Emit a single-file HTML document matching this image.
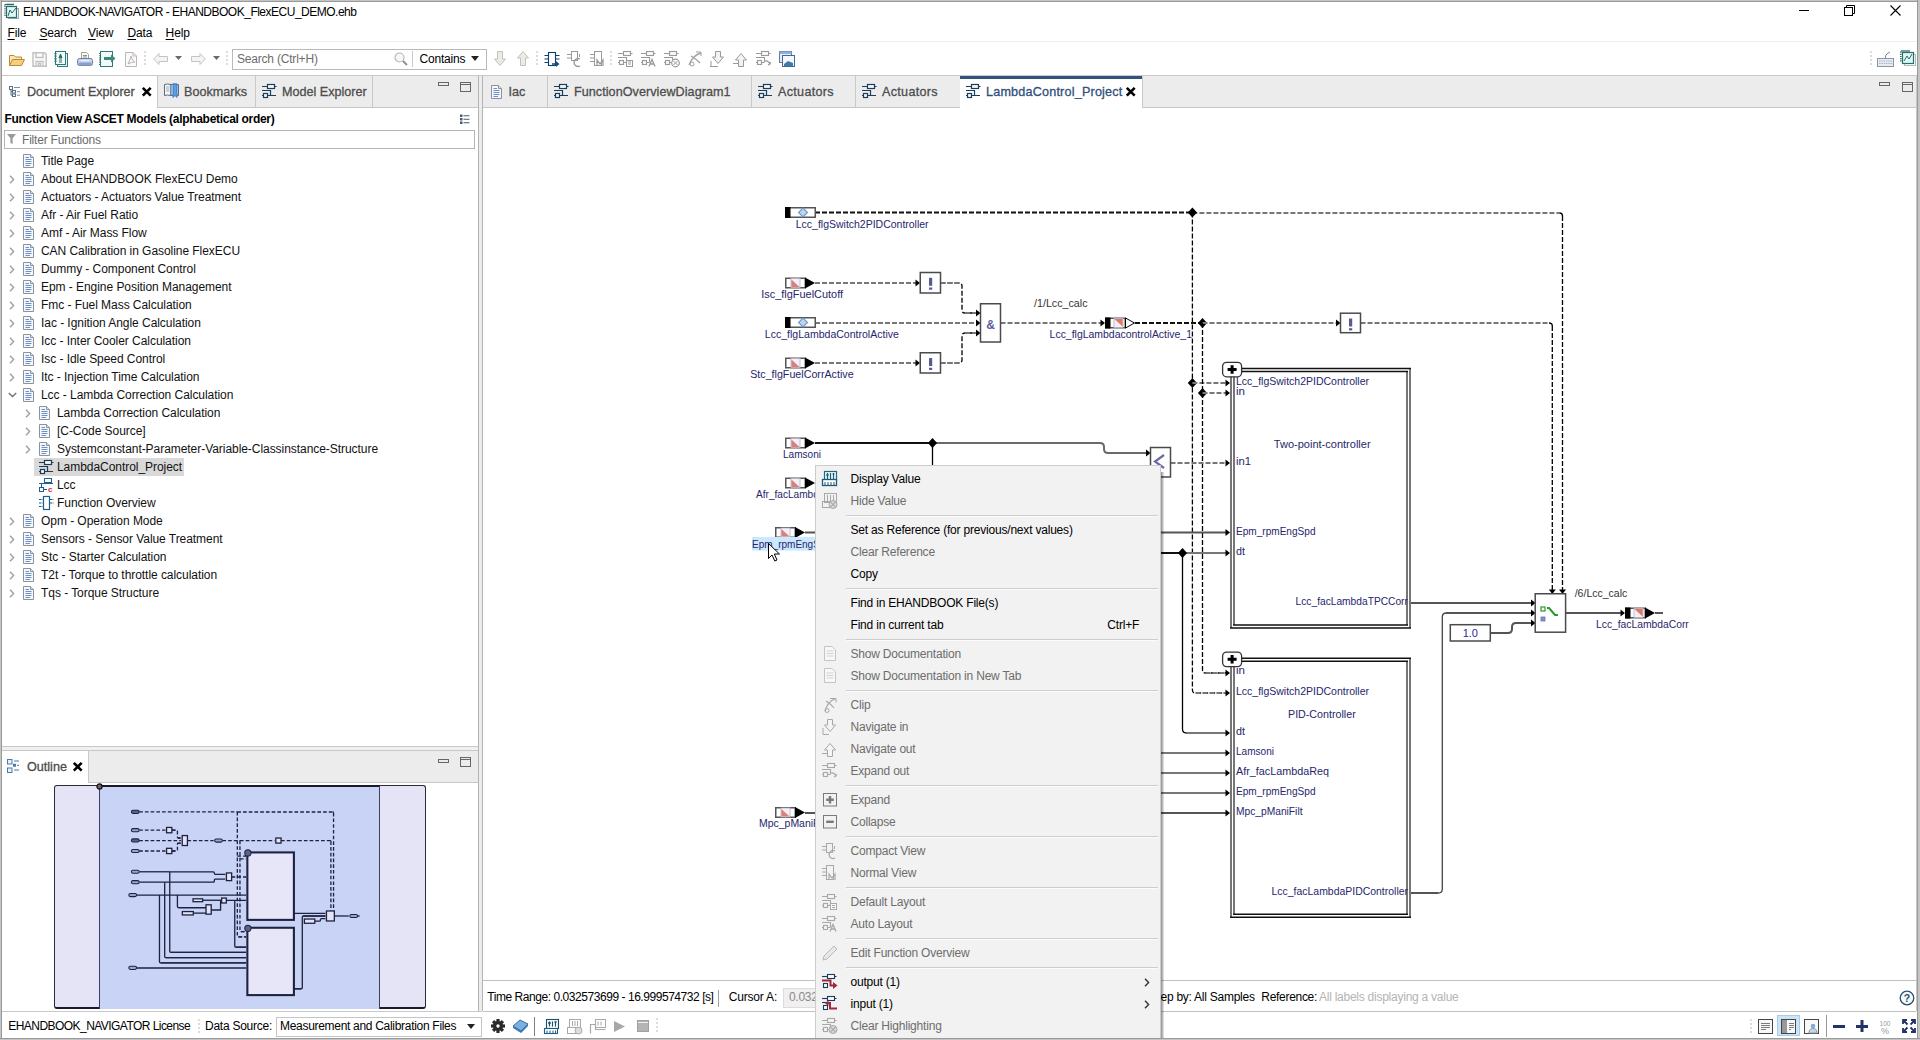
<!DOCTYPE html><html><head><meta charset="utf-8"><style>
html,body{margin:0;padding:0;}
body{width:1920px;height:1040px;overflow:hidden;position:relative;background:#fff;font-family:"Liberation Sans", sans-serif;}
.t{position:absolute;white-space:pre;font-family:"Liberation Sans", sans-serif;}
svg{overflow:visible;position:absolute}
</style></head><body>
<svg style="position:absolute;left:3px;top:3px;" width="16" height="16" viewBox="0 0 16 16"><rect x="5.5" y="5.5" width="10" height="10" fill="none" stroke="#9ab" stroke-width="1"/><rect x="3.5" y="3.5" width="10" height="11" fill="#dff7f7" stroke="#2d6e6a" stroke-width="1.2"/><path d="M1.5 2.5 Q2 1 4 1.5 H11" stroke="#2f6a66" stroke-width="1.3" fill="none"/><path d="M2 3 V14" stroke="#2f6a66" stroke-width="1.3" stroke-dasharray="1.2 1"/><path d="M5 13 L7 7 L9 10 L13 5" stroke="#2f6a66" fill="none"/></svg>
<div class="t" style="left:23px;top:5.84px;font-size:12px;line-height:12px;color:#000;font-weight:normal;letter-spacing:-0.5px;">EHANDBOOK-NAVIGATOR - EHANDBOOK_FlexECU_DEMO.ehb</div>
<svg style="position:absolute;left:1799px;top:10px;" width="10" height="1" viewBox="0 0 10 1"><rect x="0" y="0" width="10" height="1" fill="#000"/></svg>
<svg style="position:absolute;left:1844px;top:5px;" width="11" height="11" viewBox="0 0 11 11"><rect x="0.5" y="2.5" width="8" height="8" fill="none" stroke="#000"/><path d="M2.5 2.5 V0.5 H10.5 V8.5 H8.5" fill="none" stroke="#000"/></svg>
<svg style="position:absolute;left:1890px;top:5px;" width="11" height="11" viewBox="0 0 11 11"><path d="M0.5 0.5 L10.5 10.5 M10.5 0.5 L0.5 10.5" stroke="#000" stroke-width="1.1"/></svg>
<div class="t" style="left:7.5px;top:26.84px;font-size:12px;line-height:12px;color:#000;font-weight:normal;letter-spacing:-0.15px;"><u style="text-decoration-thickness:1px;text-underline-offset:2px">F</u>ile</div>
<div class="t" style="left:39.4px;top:26.84px;font-size:12px;line-height:12px;color:#000;font-weight:normal;letter-spacing:-0.15px;"><u style="text-decoration-thickness:1px;text-underline-offset:2px">S</u>earch</div>
<div class="t" style="left:88px;top:26.84px;font-size:12px;line-height:12px;color:#000;font-weight:normal;letter-spacing:-0.15px;"><u style="text-decoration-thickness:1px;text-underline-offset:2px">V</u>iew</div>
<div class="t" style="left:127.5px;top:26.84px;font-size:12px;line-height:12px;color:#000;font-weight:normal;letter-spacing:-0.15px;"><u style="text-decoration-thickness:1px;text-underline-offset:2px">D</u>ata</div>
<div class="t" style="left:165.6px;top:26.84px;font-size:12px;line-height:12px;color:#000;font-weight:normal;letter-spacing:-0.15px;"><u style="text-decoration-thickness:1px;text-underline-offset:2px">H</u>elp</div>
<div style="position:absolute;left:2px;top:41px;width:1915px;height:1px;background:#f0f0f0"></div>
<svg style="position:absolute;left:9px;top:54px;" width="16" height="13" viewBox="0 0 16 13"><path d="M0.5 11.5 V1.5 H5 L6.5 3 H12.5 V5.5" fill="#fbe7b4" stroke="#b88a3a"/><path d="M0.5 11.5 L3.5 5.5 H15.5 L12.5 11.5Z" fill="#f6cf7a" stroke="#b88a3a"/></svg>
<svg style="position:absolute;left:32px;top:52px;" width="15" height="15" viewBox="0 0 15 15"><path d="M1 0.8 H12.5 L14.2 2.5 V14.2 H1Z" fill="#fafafa" stroke="#c2c2c2" stroke-width="1.5"/><path d="M4 1 V5.5 H11 V1" fill="none" stroke="#c2c2c2" stroke-width="1.5"/><path d="M4 14 V9.5 H11 V14 M6.5 14 V11.5 H8.5 V14" fill="none" stroke="#c2c2c2" stroke-width="1.3"/></svg>
<svg style="position:absolute;left:54px;top:51px;" width="15" height="16" viewBox="0 0 15 16"><rect x="3.5" y="2.5" width="10" height="13" fill="#e0f4f2" stroke="#2f7f77"/><rect x="1.5" y="0.5" width="10" height="13" fill="#f0faf8" stroke="#2c7a72"/><path d="M1.5 2v10" stroke="#2c7a72" stroke-dasharray="1.2 1.3" stroke-width="2.2"/><path d="M6.5 3 L5 7 H8Z M5 9h3 M5 11h3" stroke="#2c6a62" fill="#2c6a62" stroke-width="1"/></svg>
<svg style="position:absolute;left:77px;top:52px;" width="16" height="15" viewBox="0 0 16 15"><path d="M4.5 0.5 H9.5 L11.5 2.5 V7 H4.5Z" fill="#fffbe8" stroke="#a8a080"/><path d="M6 3.5h4 M6 5h4" stroke="#8090b0"/><rect x="0.5" y="6.5" width="15" height="7" rx="2" fill="#c8d6ee" stroke="#6a80a8"/><rect x="1.5" y="10.5" width="13" height="3" fill="#8aa0c8"/><path d="M4 8.5h8" stroke="#eef"/></svg>
<svg style="position:absolute;left:100px;top:51px;" width="16" height="16" viewBox="0 0 16 16"><rect x="0.5" y="0.5" width="12" height="15" fill="#f2faf9" stroke="#2c7a72"/><path d="M0 2v12" stroke="#2c7a72" stroke-dasharray="1 1.2" stroke-width="2"/><path d="M4 7.5 H12" stroke="#3a8a80" stroke-width="3"/><path d="M11 3.5 L15.5 7.5 L11 11.5Z" fill="#3a8a80"/></svg>
<svg style="position:absolute;left:125px;top:52px;" width="12" height="15" viewBox="0 0 12 15"><path d="M0.5 0.5 H8 L11.5 4 V14.5 H0.5 Z" fill="#fafafa" stroke="#b8b8b8"/><path d="M8 0.5 V4 H11.5" fill="none" stroke="#b8b8b8"/><path d="M3 12 Q5 8 6 4 Q7 9 10 10 Q6 10 3 12Z" fill="none" stroke="#b8a8a8" stroke-width="0.9"/></svg>
<svg style="position:absolute;left:144px;top:51px;" width="2" height="16" viewBox="0 0 2 16"><path d="M1 0 V16" stroke="#dcdcdc" stroke-width="2" stroke-dasharray="2 2"/></svg>
<svg style="position:absolute;left:153px;top:53px;" width="15" height="12" viewBox="0 0 15 12"><path d="M6 0.5 L0.7 6 L6 11.5 V8.5 H14.5 V3.5 H6 Z" fill="#f4f4f4" stroke="#c4c4c4"/></svg>
<svg style="position:absolute;left:175px;top:56px;" width="8" height="4" viewBox="0 0 8 4"><path d="M0 0 H7 L3.5 4Z" fill="#6a6a6a"/></svg>
<svg style="position:absolute;left:191px;top:53px;" width="15" height="12" viewBox="0 0 15 12"><path d="M9 0.5 L14.3 6 L9 11.5 V8.5 H0.5 V3.5 H9 Z" fill="#f4f4f4" stroke="#c4c4c4"/></svg>
<svg style="position:absolute;left:213px;top:56px;" width="8" height="4" viewBox="0 0 8 4"><path d="M0 0 H7 L3.5 4Z" fill="#6a6a6a"/></svg>
<svg style="position:absolute;left:226px;top:51px;" width="2" height="16" viewBox="0 0 2 16"><path d="M1 0 V16" stroke="#dcdcdc" stroke-width="2" stroke-dasharray="2 2"/></svg>
<div style="position:absolute;left:232px;top:49px;width:253px;height:19px;border:1px solid #b9b9b9;background:#fff"></div>
<div class="t" style="left:237px;top:52.84px;font-size:12px;line-height:12px;color:#6d6d6d;font-weight:normal;letter-spacing:-0.2px;">Search (Ctrl+H)</div>
<svg style="position:absolute;left:394px;top:52px;" width="14" height="14" viewBox="0 0 14 14"><circle cx="5.5" cy="5.5" r="4.5" fill="#f4f8fb" stroke="#b8b8b8" stroke-width="1.2"/><path d="M9 9 L13 13" stroke="#909090" stroke-width="2"/></svg>
<div style="position:absolute;left:412px;top:51px;width:1px;height:16px;background:#c8c8c8"></div>
<div class="t" style="left:419.5px;top:52.84px;font-size:12px;line-height:12px;color:#000;font-weight:normal;letter-spacing:-0.2px;">Contains</div>
<svg style="position:absolute;left:471px;top:56px;" width="8" height="5" viewBox="0 0 8 5"><path d="M0 0 H8 L4 5Z" fill="#222"/></svg>
<svg style="position:absolute;left:494px;top:51px;" width="12" height="15" viewBox="0 0 12 15"><path d="M3.5 0.5 H8.5 V8 H11.5 L6 14.5 L0.5 8 H3.5Z" fill="#ecece6" stroke="#c2c2bc"/></svg>
<svg style="position:absolute;left:517px;top:51px;" width="12" height="15" viewBox="0 0 12 15"><path d="M3.5 14.5 H8.5 V7 H11.5 L6 0.5 L0.5 7 H3.5Z" fill="#ecece6" stroke="#c2c2bc"/></svg>
<svg style="position:absolute;left:536px;top:51px;" width="2" height="16" viewBox="0 0 2 16"><path d="M1 0 V16" stroke="#dcdcdc" stroke-width="2" stroke-dasharray="2 2"/></svg>
<svg style="position:absolute;left:544px;top:51px;" width="16" height="16" viewBox="0 0 16 16"><rect x="4.5" y="1.5" width="7" height="13" fill="#fff" stroke="#0f3d66" stroke-width="1.1"/><path d="M0.5 4.5h3.5 M0.5 8h3.5 M0.5 11.5h3.5 M12 4.5h3.5 M12 8h3.5" stroke="#0f3d66" stroke-width="1.2"/><path d="M8 13 h5" stroke="#1a5080" stroke-width="1.6"/><path d="M12 10 L15.5 13 L12 16Z" fill="#1a5080"/></svg>
<svg style="position:absolute;left:567px;top:51px;" width="16" height="16" viewBox="0 0 16 16"><path d="M0 3.5h4 M0 7h4" stroke="#9a9a9a"/><rect x="4.5" y="0.5" width="6" height="9" fill="none" stroke="#9a9a9a"/><path d="M13 8 A4 4 0 1 0 13 15" fill="none" stroke="#9a9a9a" stroke-width="1.4"/><path d="M12.5 3 v3" stroke="#9a9a9a"/></svg>
<svg style="position:absolute;left:590px;top:51px;" width="16" height="16" viewBox="0 0 16 16"><path d="M0 3.5h4 M0 7h4 M0 10.5h4" stroke="#9a9a9a"/><rect x="4.5" y="0.5" width="7" height="14" fill="none" stroke="#9a9a9a"/><path d="M7 15 V9 L10 13 L13 9 V15" fill="none" stroke="#9a9a9a" stroke-width="1.3"/></svg>
<svg style="position:absolute;left:610px;top:51px;" width="2" height="16" viewBox="0 0 2 16"><path d="M1 0 V16" stroke="#dcdcdc" stroke-width="2" stroke-dasharray="2 2"/></svg>
<svg style="position:absolute;left:618px;top:51px;" width="16" height="16" viewBox="0 0 16 16"><path d="M0 2.5 H14.5 M0 6.5 H8.5 V11.5 M0 11.5 H8" stroke="#9a9a9a" stroke-width="1.1" fill="none"/><rect x="5.5" y="0.5" width="7" height="4" fill="#fafafa" stroke="#9a9a9a" stroke-width="1.1"/><rect x="1.5" y="9.5" width="4" height="4" fill="#fafafa" stroke="#9a9a9a" stroke-width="1.1"/><rect x="8.5" y="9.5" width="6" height="6" fill="#fff" stroke="#9a9a9a"/><path d="M10 11h3 M10 13h3" stroke="#9a9a9a"/></svg>
<svg style="position:absolute;left:641px;top:51px;" width="16" height="16" viewBox="0 0 16 16"><path d="M0 2.5 H14.5 M0 6.5 H8.5 V11.5 M0 11.5 H8" stroke="#9a9a9a" stroke-width="1.1" fill="none"/><rect x="5.5" y="0.5" width="7" height="4" fill="#fafafa" stroke="#9a9a9a" stroke-width="1.1"/><rect x="1.5" y="9.5" width="4" height="4" fill="#fafafa" stroke="#9a9a9a" stroke-width="1.1"/><path d="M8 15.5 L11 8.5 L14 15.5 M9 13h4" stroke="#9a9a9a" fill="none" stroke-width="1.3"/></svg>
<svg style="position:absolute;left:664px;top:51px;" width="16" height="16" viewBox="0 0 16 16"><path d="M0 2.5 H14.5 M0 6.5 H8.5 V11.5 M0 11.5 H8" stroke="#9a9a9a" stroke-width="1.1" fill="none"/><rect x="5.5" y="0.5" width="7" height="4" fill="#fafafa" stroke="#9a9a9a" stroke-width="1.1"/><rect x="1.5" y="9.5" width="4" height="4" fill="#fafafa" stroke="#9a9a9a" stroke-width="1.1"/><circle cx="11.5" cy="12" r="3.8" fill="#fff" stroke="#9a9a9a" stroke-width="1.2"/><path d="M9.5 10 L13.5 14 M13.5 10 L9.5 14" stroke="#9a9a9a"/></svg>
<svg style="position:absolute;left:687px;top:51px;" width="16" height="16" viewBox="0 0 16 16"><path d="M2 14 Q6 4 14 2 M4 5 Q9 8 13 12" stroke="#a0a0a0" stroke-width="1.3" fill="none"/><circle cx="5" cy="13" r="2" fill="none" stroke="#a0a0a0"/><path d="M9 1 h5 v4" stroke="#a0a0a0" fill="none"/></svg>
<svg style="position:absolute;left:710px;top:51px;" width="16" height="16" viewBox="0 0 16 16"><path d="M5.5 0.5 H10.5 V6 H13.5 L8 12.5 L2.5 6 H5.5Z" fill="#f2f2f2" stroke="#9a9a9a"/><path d="M0 15.5 H8" stroke="#9a9a9a"/><path d="M1 10 V15.5" stroke="#9a9a9a"/></svg>
<svg style="position:absolute;left:733px;top:51px;" width="16" height="16" viewBox="0 0 16 16"><path d="M5.5 15.5 H10.5 V9 H13.5 L8 2.5 L2.5 9 H5.5Z" fill="#f2f2f2" stroke="#9a9a9a"/><path d="M0 12.5 H5" stroke="#9a9a9a"/></svg>
<svg style="position:absolute;left:756px;top:51px;" width="16" height="16" viewBox="0 0 16 16"><path d="M0 2.5 H14.5 M0 6.5 H8.5 V11.5 M0 11.5 H8" stroke="#9a9a9a" stroke-width="1.1" fill="none"/><rect x="5.5" y="0.5" width="7" height="4" fill="#fafafa" stroke="#9a9a9a" stroke-width="1.1"/><rect x="1.5" y="9.5" width="4" height="4" fill="#fafafa" stroke="#9a9a9a" stroke-width="1.1"/><path d="M9 10 Q12 9 14 13 M12 14 L14 13 L14.5 11" stroke="#9a9a9a" fill="none" stroke-width="1.2"/></svg>
<svg style="position:absolute;left:779px;top:51px;" width="16" height="16" viewBox="0 0 16 16"><rect x="0.5" y="0.5" width="12" height="11" fill="#e8eef6" stroke="#5878a0"/><rect x="0.5" y="0.5" width="12" height="2.5" fill="#8fb0d8"/><rect x="3.5" y="4.5" width="12" height="11" fill="#f4f7fb" stroke="#3f6a96"/><path d="M5 13 L9 10 L14 12 V15 H5Z" fill="#3f7aa6"/></svg>
<svg style="position:absolute;left:1870px;top:51px;" width="2" height="16" viewBox="0 0 2 16"><path d="M1 0 V16" stroke="#dcdcdc" stroke-width="2" stroke-dasharray="2 2"/></svg>
<svg style="position:absolute;left:1877px;top:51px;" width="17" height="16" viewBox="0 0 17 16"><rect x="0.5" y="7.5" width="16" height="8" fill="#e6ecf2" stroke="#8a96a4"/><path d="M2 10h13 M2 12.5h13" stroke="#a8b4c2" stroke-dasharray="1.5 0.8"/><path d="M8.5 7.5 V5 Q9 3 13 1" stroke="#7a8694" fill="none"/></svg>
<svg style="position:absolute;left:1900px;top:50px;" width="17" height="17" viewBox="0 0 17 17"><rect x="4.5" y="4.5" width="11" height="11" fill="none" stroke="#a8c0c0"/><rect x="2.5" y="2.5" width="11" height="11" fill="#dff7f7" stroke="#2d6e6a" stroke-width="1.2"/><path d="M0.8 1.5 V12" stroke="#2f6a66" stroke-width="1.5" stroke-dasharray="1.2 1"/><path d="M1 1 H10" stroke="#2f6a66" stroke-width="1.3"/><path d="M4 11 L7 6 L9 9 L12 4" stroke="#2f6a66" fill="none"/></svg>
<div style="position:absolute;left:2px;top:75px;width:1915px;height:1px;background:#c9c9c9"></div>
<div style="position:absolute;left:2px;top:76px;width:476px;height:31px;background:#ececec"></div>
<div style="position:absolute;left:2px;top:76px;width:155px;height:32px;background:#fff"></div>
<div style="position:absolute;left:157px;top:76px;width:1px;height:31px;background:#c8c8c8"></div>
<div style="position:absolute;left:255px;top:76px;width:1px;height:31px;background:#c8c8c8"></div>
<div style="position:absolute;left:372px;top:76px;width:1px;height:31px;background:#c8c8c8"></div>
<div style="position:absolute;left:157px;top:107px;width:321px;height:1px;background:#c8c8c8"></div>
<svg style="position:absolute;left:9px;top:86px;" width="12" height="11" viewBox="0 0 12 11"><rect x="0.5" y="0.5" width="3" height="3" fill="none" stroke="#5a7088"/><rect x="3.5" y="4.5" width="3" height="2.5" fill="none" stroke="#5a7088"/><rect x="3.5" y="8" width="3" height="2.5" fill="none" stroke="#5a7088"/><path d="M2 3.5 V9.2 H3.5 M2 5.7h1.5" stroke="#5a7088" fill="none"/><path d="M5 1.5 H11 M8 5.7h3 M8 9.2h3" stroke="#8090a0"/></svg>
<div class="t" style="left:27px;top:86.13px;font-size:12.6px;line-height:12.6px;color:#4d4d4d;font-weight:normal;letter-spacing:0px;-webkit-text-stroke:0.3px currentColor;">Document Explorer</div>
<svg style="position:absolute;left:141.5px;top:87px;" width="9.5" height="9.5" viewBox="0 0 9.5 9.5"><path d="M0.8 0.8 L8.7 8.7 M8.7 0.8 L0.8 8.7" stroke="#000" stroke-width="2.6"/></svg>
<svg style="position:absolute;left:164px;top:83px;" width="15" height="15" viewBox="0 0 15 15"><path d="M0.5 1.5 Q3 0.5 7 1.5 V12.5 Q3 11.5 0.5 12.5Z" fill="#f4f6fa" stroke="#5a6a80"/><path d="M7 1.5 Q11 0.5 14.5 1.5 V12.5 Q11 11.5 7 12.5Z" fill="#dce8f8" stroke="#5a6a80"/><path d="M9 1 H13 V14.5 L11 12.5 L9 14.5Z" fill="#5aa0e8" stroke="#2a6ab8" stroke-width="0.8"/><path d="M2 4h3.5 M2 6h3.5 M2 8h3.5" stroke="#a0aab8"/></svg>
<div class="t" style="left:184px;top:86.13px;font-size:12.6px;line-height:12.6px;color:#4d4d4d;font-weight:normal;letter-spacing:0px;-webkit-text-stroke:0.3px currentColor;">Bookmarks</div>
<svg style="position:absolute;left:262px;top:84px;" width="15" height="14" viewBox="0 0 15 14"><path d="M0 2.5 H14.5 M0 6.5 H8.5 V11.5 M0 11.5 H14" stroke="#1e3c58" stroke-width="1.2" fill="none"/><rect x="5.5" y="0.5" width="7" height="4" fill="#f0fbff" stroke="#1e3c58" stroke-width="1.2"/><rect x="1.5" y="9.5" width="4" height="4" fill="#f0fbff" stroke="#1e3c58" stroke-width="1.2"/></svg>
<div class="t" style="left:282px;top:86.13px;font-size:12.6px;line-height:12.6px;color:#4d4d4d;font-weight:normal;letter-spacing:0px;-webkit-text-stroke:0.3px currentColor;">Model Explorer</div>
<svg style="position:absolute;left:438px;top:82px;" width="11" height="4" viewBox="0 0 11 4"><rect x="0.5" y="0.5" width="10" height="3" fill="none" stroke="#666"/></svg>
<svg style="position:absolute;left:460px;top:82px;" width="11" height="10" viewBox="0 0 11 10"><rect x="0.5" y="0.5" width="10" height="9" fill="none" stroke="#666"/><path d="M0.5 2.5 H10.5" stroke="#666"/></svg>
<div class="t" style="left:4.5px;top:112.84px;font-size:12px;line-height:12px;color:#000;font-weight:bold;letter-spacing:-0.3px;">Function View ASCET Models (alphabetical order)</div>
<svg style="position:absolute;left:460px;top:114px;" width="10" height="10" viewBox="0 0 10 10"><rect x="0" y="0.5" width="2.5" height="2.5" fill="#4a5a6e"/><rect x="0" y="4" width="2.5" height="2.5" fill="#4a5a6e"/><rect x="0" y="7.5" width="2.5" height="2.5" fill="#4a5a6e"/><path d="M3.5 1.7h6 M3.5 5.2h6 M3.5 8.7h6" stroke="#4a5a6e" stroke-width="1.1"/></svg>
<div style="position:absolute;left:4px;top:130px;width:469px;height:17px;border:1px solid #b4b4b4;background:#fff"></div>
<svg style="position:absolute;left:6.5px;top:134px;" width="9" height="10" viewBox="0 0 9 10"><path d="M0 0 H9 L5.6 4.2 V10 L3.4 9 V4.2 Z" fill="#9a9a9a"/></svg>
<div class="t" style="left:22px;top:133.84px;font-size:12px;line-height:12px;color:#6a6a6a;font-weight:normal;letter-spacing:-0.2px;">Filter Functions</div>
<svg style="position:absolute;left:23px;top:154px;" width="12" height="15" viewBox="0 0 12 15"><path d="M0.5 0.5 H7.5 L10.5 3.5 V13.5 H0.5 Z" fill="#f4f7fc" stroke="#8a929c"/><path d="M7.5 0.5 V3.5 H10.5" fill="#dde2e8" stroke="#8a929c"/><path d="M2.5 3.5h3.5 M2.5 5.5h6 M2.5 7.5h6 M2.5 9.5h6 M2.5 11.5h4.5" stroke="#6f8fc8" stroke-width="1"/></svg>
<div class="t" style="left:41px;top:154.64px;font-size:12px;line-height:12px;color:#111;font-weight:normal;letter-spacing:-0.05px;">Title Page</div>
<svg style="position:absolute;left:9px;top:175px;" width="6" height="9" viewBox="0 0 6 9"><path d="M1 0.8 L4.6 4.5 L1 8.2" fill="none" stroke="#a0a0a0" stroke-width="1.4"/></svg>
<svg style="position:absolute;left:23px;top:172px;" width="12" height="15" viewBox="0 0 12 15"><path d="M0.5 0.5 H7.5 L10.5 3.5 V13.5 H0.5 Z" fill="#f4f7fc" stroke="#8a929c"/><path d="M7.5 0.5 V3.5 H10.5" fill="#dde2e8" stroke="#8a929c"/><path d="M2.5 3.5h3.5 M2.5 5.5h6 M2.5 7.5h6 M2.5 9.5h6 M2.5 11.5h4.5" stroke="#6f8fc8" stroke-width="1"/></svg>
<div class="t" style="left:41px;top:172.64px;font-size:12px;line-height:12px;color:#111;font-weight:normal;letter-spacing:-0.05px;">About EHANDBOOK FlexECU Demo</div>
<svg style="position:absolute;left:9px;top:193px;" width="6" height="9" viewBox="0 0 6 9"><path d="M1 0.8 L4.6 4.5 L1 8.2" fill="none" stroke="#a0a0a0" stroke-width="1.4"/></svg>
<svg style="position:absolute;left:23px;top:190px;" width="12" height="15" viewBox="0 0 12 15"><path d="M0.5 0.5 H7.5 L10.5 3.5 V13.5 H0.5 Z" fill="#f4f7fc" stroke="#8a929c"/><path d="M7.5 0.5 V3.5 H10.5" fill="#dde2e8" stroke="#8a929c"/><path d="M2.5 3.5h3.5 M2.5 5.5h6 M2.5 7.5h6 M2.5 9.5h6 M2.5 11.5h4.5" stroke="#6f8fc8" stroke-width="1"/></svg>
<div class="t" style="left:41px;top:190.64px;font-size:12px;line-height:12px;color:#111;font-weight:normal;letter-spacing:-0.05px;">Actuators - Actuators Value Treatment</div>
<svg style="position:absolute;left:9px;top:211px;" width="6" height="9" viewBox="0 0 6 9"><path d="M1 0.8 L4.6 4.5 L1 8.2" fill="none" stroke="#a0a0a0" stroke-width="1.4"/></svg>
<svg style="position:absolute;left:23px;top:208px;" width="12" height="15" viewBox="0 0 12 15"><path d="M0.5 0.5 H7.5 L10.5 3.5 V13.5 H0.5 Z" fill="#f4f7fc" stroke="#8a929c"/><path d="M7.5 0.5 V3.5 H10.5" fill="#dde2e8" stroke="#8a929c"/><path d="M2.5 3.5h3.5 M2.5 5.5h6 M2.5 7.5h6 M2.5 9.5h6 M2.5 11.5h4.5" stroke="#6f8fc8" stroke-width="1"/></svg>
<div class="t" style="left:41px;top:208.64px;font-size:12px;line-height:12px;color:#111;font-weight:normal;letter-spacing:-0.05px;">Afr - Air Fuel Ratio</div>
<svg style="position:absolute;left:9px;top:229px;" width="6" height="9" viewBox="0 0 6 9"><path d="M1 0.8 L4.6 4.5 L1 8.2" fill="none" stroke="#a0a0a0" stroke-width="1.4"/></svg>
<svg style="position:absolute;left:23px;top:226px;" width="12" height="15" viewBox="0 0 12 15"><path d="M0.5 0.5 H7.5 L10.5 3.5 V13.5 H0.5 Z" fill="#f4f7fc" stroke="#8a929c"/><path d="M7.5 0.5 V3.5 H10.5" fill="#dde2e8" stroke="#8a929c"/><path d="M2.5 3.5h3.5 M2.5 5.5h6 M2.5 7.5h6 M2.5 9.5h6 M2.5 11.5h4.5" stroke="#6f8fc8" stroke-width="1"/></svg>
<div class="t" style="left:41px;top:226.64px;font-size:12px;line-height:12px;color:#111;font-weight:normal;letter-spacing:-0.05px;">Amf - Air Mass Flow</div>
<svg style="position:absolute;left:9px;top:247px;" width="6" height="9" viewBox="0 0 6 9"><path d="M1 0.8 L4.6 4.5 L1 8.2" fill="none" stroke="#a0a0a0" stroke-width="1.4"/></svg>
<svg style="position:absolute;left:23px;top:244px;" width="12" height="15" viewBox="0 0 12 15"><path d="M0.5 0.5 H7.5 L10.5 3.5 V13.5 H0.5 Z" fill="#f4f7fc" stroke="#8a929c"/><path d="M7.5 0.5 V3.5 H10.5" fill="#dde2e8" stroke="#8a929c"/><path d="M2.5 3.5h3.5 M2.5 5.5h6 M2.5 7.5h6 M2.5 9.5h6 M2.5 11.5h4.5" stroke="#6f8fc8" stroke-width="1"/></svg>
<div class="t" style="left:41px;top:244.64px;font-size:12px;line-height:12px;color:#111;font-weight:normal;letter-spacing:-0.05px;">CAN Calibration in Gasoline FlexECU</div>
<svg style="position:absolute;left:9px;top:265px;" width="6" height="9" viewBox="0 0 6 9"><path d="M1 0.8 L4.6 4.5 L1 8.2" fill="none" stroke="#a0a0a0" stroke-width="1.4"/></svg>
<svg style="position:absolute;left:23px;top:262px;" width="12" height="15" viewBox="0 0 12 15"><path d="M0.5 0.5 H7.5 L10.5 3.5 V13.5 H0.5 Z" fill="#f4f7fc" stroke="#8a929c"/><path d="M7.5 0.5 V3.5 H10.5" fill="#dde2e8" stroke="#8a929c"/><path d="M2.5 3.5h3.5 M2.5 5.5h6 M2.5 7.5h6 M2.5 9.5h6 M2.5 11.5h4.5" stroke="#6f8fc8" stroke-width="1"/></svg>
<div class="t" style="left:41px;top:262.64px;font-size:12px;line-height:12px;color:#111;font-weight:normal;letter-spacing:-0.05px;">Dummy - Component Control</div>
<svg style="position:absolute;left:9px;top:283px;" width="6" height="9" viewBox="0 0 6 9"><path d="M1 0.8 L4.6 4.5 L1 8.2" fill="none" stroke="#a0a0a0" stroke-width="1.4"/></svg>
<svg style="position:absolute;left:23px;top:280px;" width="12" height="15" viewBox="0 0 12 15"><path d="M0.5 0.5 H7.5 L10.5 3.5 V13.5 H0.5 Z" fill="#f4f7fc" stroke="#8a929c"/><path d="M7.5 0.5 V3.5 H10.5" fill="#dde2e8" stroke="#8a929c"/><path d="M2.5 3.5h3.5 M2.5 5.5h6 M2.5 7.5h6 M2.5 9.5h6 M2.5 11.5h4.5" stroke="#6f8fc8" stroke-width="1"/></svg>
<div class="t" style="left:41px;top:280.64px;font-size:12px;line-height:12px;color:#111;font-weight:normal;letter-spacing:-0.05px;">Epm - Engine Position Management</div>
<svg style="position:absolute;left:9px;top:301px;" width="6" height="9" viewBox="0 0 6 9"><path d="M1 0.8 L4.6 4.5 L1 8.2" fill="none" stroke="#a0a0a0" stroke-width="1.4"/></svg>
<svg style="position:absolute;left:23px;top:298px;" width="12" height="15" viewBox="0 0 12 15"><path d="M0.5 0.5 H7.5 L10.5 3.5 V13.5 H0.5 Z" fill="#f4f7fc" stroke="#8a929c"/><path d="M7.5 0.5 V3.5 H10.5" fill="#dde2e8" stroke="#8a929c"/><path d="M2.5 3.5h3.5 M2.5 5.5h6 M2.5 7.5h6 M2.5 9.5h6 M2.5 11.5h4.5" stroke="#6f8fc8" stroke-width="1"/></svg>
<div class="t" style="left:41px;top:298.64px;font-size:12px;line-height:12px;color:#111;font-weight:normal;letter-spacing:-0.05px;">Fmc - Fuel Mass Calculation</div>
<svg style="position:absolute;left:9px;top:319px;" width="6" height="9" viewBox="0 0 6 9"><path d="M1 0.8 L4.6 4.5 L1 8.2" fill="none" stroke="#a0a0a0" stroke-width="1.4"/></svg>
<svg style="position:absolute;left:23px;top:316px;" width="12" height="15" viewBox="0 0 12 15"><path d="M0.5 0.5 H7.5 L10.5 3.5 V13.5 H0.5 Z" fill="#f4f7fc" stroke="#8a929c"/><path d="M7.5 0.5 V3.5 H10.5" fill="#dde2e8" stroke="#8a929c"/><path d="M2.5 3.5h3.5 M2.5 5.5h6 M2.5 7.5h6 M2.5 9.5h6 M2.5 11.5h4.5" stroke="#6f8fc8" stroke-width="1"/></svg>
<div class="t" style="left:41px;top:316.64px;font-size:12px;line-height:12px;color:#111;font-weight:normal;letter-spacing:-0.05px;">Iac - Ignition Angle Calculation</div>
<svg style="position:absolute;left:9px;top:337px;" width="6" height="9" viewBox="0 0 6 9"><path d="M1 0.8 L4.6 4.5 L1 8.2" fill="none" stroke="#a0a0a0" stroke-width="1.4"/></svg>
<svg style="position:absolute;left:23px;top:334px;" width="12" height="15" viewBox="0 0 12 15"><path d="M0.5 0.5 H7.5 L10.5 3.5 V13.5 H0.5 Z" fill="#f4f7fc" stroke="#8a929c"/><path d="M7.5 0.5 V3.5 H10.5" fill="#dde2e8" stroke="#8a929c"/><path d="M2.5 3.5h3.5 M2.5 5.5h6 M2.5 7.5h6 M2.5 9.5h6 M2.5 11.5h4.5" stroke="#6f8fc8" stroke-width="1"/></svg>
<div class="t" style="left:41px;top:334.64px;font-size:12px;line-height:12px;color:#111;font-weight:normal;letter-spacing:-0.05px;">Icc - Inter Cooler Calculation</div>
<svg style="position:absolute;left:9px;top:355px;" width="6" height="9" viewBox="0 0 6 9"><path d="M1 0.8 L4.6 4.5 L1 8.2" fill="none" stroke="#a0a0a0" stroke-width="1.4"/></svg>
<svg style="position:absolute;left:23px;top:352px;" width="12" height="15" viewBox="0 0 12 15"><path d="M0.5 0.5 H7.5 L10.5 3.5 V13.5 H0.5 Z" fill="#f4f7fc" stroke="#8a929c"/><path d="M7.5 0.5 V3.5 H10.5" fill="#dde2e8" stroke="#8a929c"/><path d="M2.5 3.5h3.5 M2.5 5.5h6 M2.5 7.5h6 M2.5 9.5h6 M2.5 11.5h4.5" stroke="#6f8fc8" stroke-width="1"/></svg>
<div class="t" style="left:41px;top:352.64px;font-size:12px;line-height:12px;color:#111;font-weight:normal;letter-spacing:-0.05px;">Isc - Idle Speed Control</div>
<svg style="position:absolute;left:9px;top:373px;" width="6" height="9" viewBox="0 0 6 9"><path d="M1 0.8 L4.6 4.5 L1 8.2" fill="none" stroke="#a0a0a0" stroke-width="1.4"/></svg>
<svg style="position:absolute;left:23px;top:370px;" width="12" height="15" viewBox="0 0 12 15"><path d="M0.5 0.5 H7.5 L10.5 3.5 V13.5 H0.5 Z" fill="#f4f7fc" stroke="#8a929c"/><path d="M7.5 0.5 V3.5 H10.5" fill="#dde2e8" stroke="#8a929c"/><path d="M2.5 3.5h3.5 M2.5 5.5h6 M2.5 7.5h6 M2.5 9.5h6 M2.5 11.5h4.5" stroke="#6f8fc8" stroke-width="1"/></svg>
<div class="t" style="left:41px;top:370.64px;font-size:12px;line-height:12px;color:#111;font-weight:normal;letter-spacing:-0.05px;">Itc - Injection Time Calculation</div>
<svg style="position:absolute;left:7.5px;top:392px;" width="9" height="6" viewBox="0 0 9 6"><path d="M0.8 1 L4.5 4.6 L8.2 1" fill="none" stroke="#707070" stroke-width="1.4"/></svg>
<svg style="position:absolute;left:23px;top:388px;" width="12" height="15" viewBox="0 0 12 15"><path d="M0.5 0.5 H7.5 L10.5 3.5 V13.5 H0.5 Z" fill="#f4f7fc" stroke="#8a929c"/><path d="M7.5 0.5 V3.5 H10.5" fill="#dde2e8" stroke="#8a929c"/><path d="M2.5 3.5h3.5 M2.5 5.5h6 M2.5 7.5h6 M2.5 9.5h6 M2.5 11.5h4.5" stroke="#6f8fc8" stroke-width="1"/></svg>
<div class="t" style="left:41px;top:388.64px;font-size:12px;line-height:12px;color:#111;font-weight:normal;letter-spacing:-0.05px;">Lcc - Lambda Correction Calculation</div>
<svg style="position:absolute;left:25px;top:409px;" width="6" height="9" viewBox="0 0 6 9"><path d="M1 0.8 L4.6 4.5 L1 8.2" fill="none" stroke="#a0a0a0" stroke-width="1.4"/></svg>
<svg style="position:absolute;left:39px;top:406px;" width="12" height="15" viewBox="0 0 12 15"><path d="M0.5 0.5 H7.5 L10.5 3.5 V13.5 H0.5 Z" fill="#f4f7fc" stroke="#8a929c"/><path d="M7.5 0.5 V3.5 H10.5" fill="#dde2e8" stroke="#8a929c"/><path d="M2.5 3.5h3.5 M2.5 5.5h6 M2.5 7.5h6 M2.5 9.5h6 M2.5 11.5h4.5" stroke="#6f8fc8" stroke-width="1"/></svg>
<div class="t" style="left:57px;top:406.64px;font-size:12px;line-height:12px;color:#111;font-weight:normal;letter-spacing:-0.05px;">Lambda Correction Calculation</div>
<svg style="position:absolute;left:25px;top:427px;" width="6" height="9" viewBox="0 0 6 9"><path d="M1 0.8 L4.6 4.5 L1 8.2" fill="none" stroke="#a0a0a0" stroke-width="1.4"/></svg>
<svg style="position:absolute;left:39px;top:424px;" width="12" height="15" viewBox="0 0 12 15"><path d="M0.5 0.5 H7.5 L10.5 3.5 V13.5 H0.5 Z" fill="#f4f7fc" stroke="#8a929c"/><path d="M7.5 0.5 V3.5 H10.5" fill="#dde2e8" stroke="#8a929c"/><path d="M2.5 3.5h3.5 M2.5 5.5h6 M2.5 7.5h6 M2.5 9.5h6 M2.5 11.5h4.5" stroke="#6f8fc8" stroke-width="1"/></svg>
<div class="t" style="left:57px;top:424.64px;font-size:12px;line-height:12px;color:#111;font-weight:normal;letter-spacing:-0.05px;">[C-Code Source]</div>
<svg style="position:absolute;left:25px;top:445px;" width="6" height="9" viewBox="0 0 6 9"><path d="M1 0.8 L4.6 4.5 L1 8.2" fill="none" stroke="#a0a0a0" stroke-width="1.4"/></svg>
<svg style="position:absolute;left:39px;top:442px;" width="12" height="15" viewBox="0 0 12 15"><path d="M0.5 0.5 H7.5 L10.5 3.5 V13.5 H0.5 Z" fill="#f4f7fc" stroke="#8a929c"/><path d="M7.5 0.5 V3.5 H10.5" fill="#dde2e8" stroke="#8a929c"/><path d="M2.5 3.5h3.5 M2.5 5.5h6 M2.5 7.5h6 M2.5 9.5h6 M2.5 11.5h4.5" stroke="#6f8fc8" stroke-width="1"/></svg>
<div class="t" style="left:57px;top:442.64px;font-size:12px;line-height:12px;color:#111;font-weight:normal;letter-spacing:-0.05px;">Systemconstant-Parameter-Variable-Classinstance-Structure</div>
<div style="position:absolute;left:34px;top:458px;width:150px;height:18px;background:#d9d9d9"></div>
<svg style="position:absolute;left:39px;top:460px;" width="15" height="14" viewBox="0 0 15 14"><path d="M0 2.5 H14.5 M0 6.5 H8.5 V11.5 M0 11.5 H14" stroke="#1e3c58" stroke-width="1.2" fill="none"/><rect x="5.5" y="0.5" width="7" height="4" fill="#f0fbff" stroke="#1e3c58" stroke-width="1.2"/><rect x="1.5" y="9.5" width="4" height="4" fill="#f0fbff" stroke="#1e3c58" stroke-width="1.2"/></svg>
<div class="t" style="left:57px;top:460.64px;font-size:12px;line-height:12px;color:#111;font-weight:normal;letter-spacing:-0.05px;">LambdaControl_Project</div>
<svg style="position:absolute;left:39px;top:478px;" width="15" height="14" viewBox="0 0 15 14"><rect x="5.5" y="0.5" width="7" height="4" fill="none" stroke="#1f5f8f"/><rect x="0.5" y="9.5" width="4" height="4" fill="none" stroke="#1f5f8f"/><path d="M0 5.5 H14 M5 11.5 H8 M2.5 5.5 V9" stroke="#1f5f8f" fill="none"/><text x="9" y="13.5" font-size="8" font-weight="bold" fill="#c0304a" font-family="Liberation Sans">c</text></svg>
<div class="t" style="left:57px;top:478.64px;font-size:12px;line-height:12px;color:#111;font-weight:normal;letter-spacing:-0.05px;">Lcc</div>
<svg style="position:absolute;left:39px;top:496px;" width="15" height="14" viewBox="0 0 15 14"><rect x="4.5" y="0.5" width="6" height="13" fill="none" stroke="#1f5f8f" stroke-width="1.2"/><path d="M0 3.5h4 M0 7h4 M0 10.5h4 M11 3.5h4 M11 7h4" stroke="#1f5f8f" stroke-width="1.2" stroke-dasharray="2.5 1"/></svg>
<div class="t" style="left:57px;top:496.64px;font-size:12px;line-height:12px;color:#111;font-weight:normal;letter-spacing:-0.05px;">Function Overview</div>
<svg style="position:absolute;left:9px;top:517px;" width="6" height="9" viewBox="0 0 6 9"><path d="M1 0.8 L4.6 4.5 L1 8.2" fill="none" stroke="#a0a0a0" stroke-width="1.4"/></svg>
<svg style="position:absolute;left:23px;top:514px;" width="12" height="15" viewBox="0 0 12 15"><path d="M0.5 0.5 H7.5 L10.5 3.5 V13.5 H0.5 Z" fill="#f4f7fc" stroke="#8a929c"/><path d="M7.5 0.5 V3.5 H10.5" fill="#dde2e8" stroke="#8a929c"/><path d="M2.5 3.5h3.5 M2.5 5.5h6 M2.5 7.5h6 M2.5 9.5h6 M2.5 11.5h4.5" stroke="#6f8fc8" stroke-width="1"/></svg>
<div class="t" style="left:41px;top:514.64px;font-size:12px;line-height:12px;color:#111;font-weight:normal;letter-spacing:-0.05px;">Opm - Operation Mode</div>
<svg style="position:absolute;left:9px;top:535px;" width="6" height="9" viewBox="0 0 6 9"><path d="M1 0.8 L4.6 4.5 L1 8.2" fill="none" stroke="#a0a0a0" stroke-width="1.4"/></svg>
<svg style="position:absolute;left:23px;top:532px;" width="12" height="15" viewBox="0 0 12 15"><path d="M0.5 0.5 H7.5 L10.5 3.5 V13.5 H0.5 Z" fill="#f4f7fc" stroke="#8a929c"/><path d="M7.5 0.5 V3.5 H10.5" fill="#dde2e8" stroke="#8a929c"/><path d="M2.5 3.5h3.5 M2.5 5.5h6 M2.5 7.5h6 M2.5 9.5h6 M2.5 11.5h4.5" stroke="#6f8fc8" stroke-width="1"/></svg>
<div class="t" style="left:41px;top:532.64px;font-size:12px;line-height:12px;color:#111;font-weight:normal;letter-spacing:-0.05px;">Sensors - Sensor Value Treatment</div>
<svg style="position:absolute;left:9px;top:553px;" width="6" height="9" viewBox="0 0 6 9"><path d="M1 0.8 L4.6 4.5 L1 8.2" fill="none" stroke="#a0a0a0" stroke-width="1.4"/></svg>
<svg style="position:absolute;left:23px;top:550px;" width="12" height="15" viewBox="0 0 12 15"><path d="M0.5 0.5 H7.5 L10.5 3.5 V13.5 H0.5 Z" fill="#f4f7fc" stroke="#8a929c"/><path d="M7.5 0.5 V3.5 H10.5" fill="#dde2e8" stroke="#8a929c"/><path d="M2.5 3.5h3.5 M2.5 5.5h6 M2.5 7.5h6 M2.5 9.5h6 M2.5 11.5h4.5" stroke="#6f8fc8" stroke-width="1"/></svg>
<div class="t" style="left:41px;top:550.64px;font-size:12px;line-height:12px;color:#111;font-weight:normal;letter-spacing:-0.05px;">Stc - Starter Calculation</div>
<svg style="position:absolute;left:9px;top:571px;" width="6" height="9" viewBox="0 0 6 9"><path d="M1 0.8 L4.6 4.5 L1 8.2" fill="none" stroke="#a0a0a0" stroke-width="1.4"/></svg>
<svg style="position:absolute;left:23px;top:568px;" width="12" height="15" viewBox="0 0 12 15"><path d="M0.5 0.5 H7.5 L10.5 3.5 V13.5 H0.5 Z" fill="#f4f7fc" stroke="#8a929c"/><path d="M7.5 0.5 V3.5 H10.5" fill="#dde2e8" stroke="#8a929c"/><path d="M2.5 3.5h3.5 M2.5 5.5h6 M2.5 7.5h6 M2.5 9.5h6 M2.5 11.5h4.5" stroke="#6f8fc8" stroke-width="1"/></svg>
<div class="t" style="left:41px;top:568.64px;font-size:12px;line-height:12px;color:#111;font-weight:normal;letter-spacing:-0.05px;">T2t - Torque to throttle calculation</div>
<svg style="position:absolute;left:9px;top:589px;" width="6" height="9" viewBox="0 0 6 9"><path d="M1 0.8 L4.6 4.5 L1 8.2" fill="none" stroke="#a0a0a0" stroke-width="1.4"/></svg>
<svg style="position:absolute;left:23px;top:586px;" width="12" height="15" viewBox="0 0 12 15"><path d="M0.5 0.5 H7.5 L10.5 3.5 V13.5 H0.5 Z" fill="#f4f7fc" stroke="#8a929c"/><path d="M7.5 0.5 V3.5 H10.5" fill="#dde2e8" stroke="#8a929c"/><path d="M2.5 3.5h3.5 M2.5 5.5h6 M2.5 7.5h6 M2.5 9.5h6 M2.5 11.5h4.5" stroke="#6f8fc8" stroke-width="1"/></svg>
<div class="t" style="left:41px;top:586.64px;font-size:12px;line-height:12px;color:#111;font-weight:normal;letter-spacing:-0.05px;">Tqs - Torque Structure</div>
<div style="position:absolute;left:2px;top:746px;width:476px;height:1px;background:#c8c8c8"></div>
<div style="position:absolute;left:2px;top:747px;width:476px;height:3px;background:#f0f0f0"></div>
<div style="position:absolute;left:478px;top:76px;width:1px;height:935px;background:#b4b4b4"></div>
<div style="position:absolute;left:479px;top:76px;width:3px;height:935px;background:#ececec"></div>
<div style="position:absolute;left:482px;top:76px;width:1px;height:935px;background:#b4b4b4"></div>
<div style="position:absolute;left:2px;top:750px;width:476px;height:1px;background:#c8c8c8"></div>
<div style="position:absolute;left:2px;top:751px;width:476px;height:31px;background:#ececec"></div>
<div style="position:absolute;left:2px;top:751px;width:86px;height:32px;background:#fff"></div>
<div style="position:absolute;left:88px;top:751px;width:1px;height:31px;background:#c8c8c8"></div>
<div style="position:absolute;left:88px;top:782px;width:390px;height:1px;background:#c8c8c8"></div>
<svg style="position:absolute;left:7px;top:759px;" width="13" height="15" viewBox="0 0 13 15"><rect x="0.5" y="0.5" width="4.5" height="4.5" fill="#e8f0f8" stroke="#4a7aa8"/><rect x="0.5" y="9" width="4.5" height="4.5" fill="#e8f0f8" stroke="#4a7aa8"/><rect x="6.5" y="5.3" width="2" height="2" fill="none" stroke="#4a7aa8"/><path d="M7 2h5 M10 6.3h2 M7 11h5" stroke="#4a7aa8"/></svg>
<div class="t" style="left:27px;top:760.63px;font-size:12.6px;line-height:12.6px;color:#4d4d4d;font-weight:normal;letter-spacing:0px;-webkit-text-stroke:0.3px currentColor;">Outline</div>
<svg style="position:absolute;left:73px;top:762px;" width="9.5" height="9.5" viewBox="0 0 9.5 9.5"><path d="M0.8 0.8 L8.7 8.7 M8.7 0.8 L0.8 8.7" stroke="#000" stroke-width="2.6"/></svg>
<svg style="position:absolute;left:438px;top:759px;" width="11" height="4" viewBox="0 0 11 4"><rect x="0.5" y="0.5" width="10" height="3" fill="none" stroke="#666"/></svg>
<svg style="position:absolute;left:460px;top:757px;" width="11" height="10" viewBox="0 0 11 10"><rect x="0.5" y="0.5" width="10" height="9" fill="none" stroke="#666"/><path d="M0.5 2.5 H10.5" stroke="#666"/></svg>
<div style="position:absolute;left:483px;top:76px;width:1434px;height:31px;background:#ececec"></div>
<div style="position:absolute;left:483px;top:107px;width:1434px;height:1px;background:#c8c8c8"></div>
<div style="position:absolute;left:547px;top:76px;width:1px;height:31px;background:#c8c8c8"></div>
<div style="position:absolute;left:751px;top:76px;width:1px;height:31px;background:#c8c8c8"></div>
<div style="position:absolute;left:855px;top:76px;width:1px;height:31px;background:#c8c8c8"></div>
<div style="position:absolute;left:960px;top:76px;width:1px;height:31px;background:#c8c8c8"></div>
<div style="position:absolute;left:1142px;top:76px;width:1px;height:31px;background:#c8c8c8"></div>
<div style="position:absolute;left:960px;top:76px;width:182px;height:32px;background:#fff"></div>
<div style="position:absolute;left:960px;top:76px;width:182px;height:3px;background:#33527a"></div>
<div style="position:absolute;left:1142px;top:76px;width:1px;height:31px;background:#c8c8c8"></div>
<svg style="position:absolute;left:491px;top:85px;" width="12" height="15" viewBox="0 0 12 15"><path d="M0.5 0.5 H7.5 L10.5 3.5 V13.5 H0.5 Z" fill="#f4f7fc" stroke="#8a929c"/><path d="M7.5 0.5 V3.5 H10.5" fill="#dde2e8" stroke="#8a929c"/><path d="M2.5 3.5h3.5 M2.5 5.5h6 M2.5 7.5h6 M2.5 9.5h6 M2.5 11.5h4.5" stroke="#6f8fc8" stroke-width="1"/></svg>
<div class="t" style="left:508.5px;top:86.13px;font-size:12.6px;line-height:12.6px;color:#4d4d4d;font-weight:normal;letter-spacing:0px;-webkit-text-stroke:0.3px currentColor;">Iac</div>
<svg style="position:absolute;left:554px;top:84px;" width="15" height="14" viewBox="0 0 15 14"><path d="M0 2.5 H14.5 M0 6.5 H8.5 V11.5 M0 11.5 H14" stroke="#1e3c58" stroke-width="1.2" fill="none"/><rect x="5.5" y="0.5" width="7" height="4" fill="#f0fbff" stroke="#1e3c58" stroke-width="1.2"/><rect x="1.5" y="9.5" width="4" height="4" fill="#f0fbff" stroke="#1e3c58" stroke-width="1.2"/></svg>
<div class="t" style="left:574px;top:86.13px;font-size:12.6px;line-height:12.6px;color:#4d4d4d;font-weight:normal;letter-spacing:0.05px;-webkit-text-stroke:0.3px currentColor;">FunctionOverviewDiagram1</div>
<svg style="position:absolute;left:758px;top:84px;" width="15" height="14" viewBox="0 0 15 14"><path d="M0 2.5 H14.5 M0 6.5 H8.5 V11.5 M0 11.5 H14" stroke="#1e3c58" stroke-width="1.2" fill="none"/><rect x="5.5" y="0.5" width="7" height="4" fill="#f0fbff" stroke="#1e3c58" stroke-width="1.2"/><rect x="1.5" y="9.5" width="4" height="4" fill="#f0fbff" stroke="#1e3c58" stroke-width="1.2"/></svg>
<div class="t" style="left:778px;top:86.13px;font-size:12.6px;line-height:12.6px;color:#4d4d4d;font-weight:normal;letter-spacing:0.3px;-webkit-text-stroke:0.3px currentColor;">Actuators</div>
<svg style="position:absolute;left:862px;top:84px;" width="15" height="14" viewBox="0 0 15 14"><path d="M0 2.5 H14.5 M0 6.5 H8.5 V11.5 M0 11.5 H14" stroke="#1e3c58" stroke-width="1.2" fill="none"/><rect x="5.5" y="0.5" width="7" height="4" fill="#f0fbff" stroke="#1e3c58" stroke-width="1.2"/><rect x="1.5" y="9.5" width="4" height="4" fill="#f0fbff" stroke="#1e3c58" stroke-width="1.2"/></svg>
<div class="t" style="left:882px;top:86.13px;font-size:12.6px;line-height:12.6px;color:#4d4d4d;font-weight:normal;letter-spacing:0.3px;-webkit-text-stroke:0.3px currentColor;">Actuators</div>
<svg style="position:absolute;left:966px;top:84px;" width="15" height="14" viewBox="0 0 15 14"><path d="M0 2.5 H14.5 M0 6.5 H8.5 V11.5 M0 11.5 H14" stroke="#1e3c58" stroke-width="1.2" fill="none"/><rect x="5.5" y="0.5" width="7" height="4" fill="#f0fbff" stroke="#1e3c58" stroke-width="1.2"/><rect x="1.5" y="9.5" width="4" height="4" fill="#f0fbff" stroke="#1e3c58" stroke-width="1.2"/></svg>
<div class="t" style="left:986px;top:86.13px;font-size:12.6px;line-height:12.6px;color:#2f4f7c;font-weight:normal;letter-spacing:0.2px;-webkit-text-stroke:0.3px currentColor;">LambdaControl_Project</div>
<svg style="position:absolute;left:1126px;top:87px;" width="9.5" height="9.5" viewBox="0 0 9.5 9.5"><path d="M0.8 0.8 L8.7 8.7 M8.7 0.8 L0.8 8.7" stroke="#000" stroke-width="2.6"/></svg>
<svg style="position:absolute;left:1879px;top:82px;" width="11" height="4" viewBox="0 0 11 4"><rect x="0.5" y="0.5" width="10" height="3" fill="none" stroke="#666"/></svg>
<svg style="position:absolute;left:1902px;top:82px;" width="11" height="10" viewBox="0 0 11 10"><rect x="0.5" y="0.5" width="10" height="9" fill="none" stroke="#666"/><path d="M0.5 2.5 H10.5" stroke="#666"/></svg>
<div style="position:absolute;left:1916px;top:76px;width:1px;height:935px;background:#c8c8c8"></div>
<div style="position:absolute;left:483px;top:980px;width:1433px;height:1px;background:#c0c0c0"></div>
<div style="position:absolute;left:483px;top:1011px;width:1433px;height:1px;background:#c0c0c0"></div>
<div class="t" style="left:487.3px;top:991.34px;font-size:12px;line-height:12px;color:#000;font-weight:normal;letter-spacing:-0.45px;">Time Range: 0.032573699 - 16.999574732 [s]</div>
<div style="position:absolute;left:718px;top:990px;width:1px;height:17px;background:#a0a0a0"></div>
<div class="t" style="left:728.8px;top:991.34px;font-size:12px;line-height:12px;color:#000;font-weight:normal;letter-spacing:-0.2px;">Cursor A:</div>
<div style="position:absolute;left:782.5px;top:987.5px;width:120px;height:20px;background:#f0f0f0;border:1px solid #dcdcdc;box-sizing:border-box"></div>
<div class="t" style="left:789px;top:991.34px;font-size:12px;line-height:12px;color:#8a8a8a;font-weight:normal;letter-spacing:-0.3px;">0.032573699</div>
<div class="t" style="left:1100px;top:990.5px;width:154.7px;text-align:right;font-size:12px;line-height:12px;color:#000;letter-spacing:-0.25px">Step by: All Samples</div>
<div class="t" style="left:1261.3px;top:991.34px;font-size:12px;line-height:12px;color:#000;font-weight:normal;letter-spacing:-0.3px;">Reference:</div>
<div class="t" style="left:1319px;top:991.34px;font-size:12px;line-height:12px;color:#b4b4b4;font-weight:normal;letter-spacing:-0.25px;">All labels displaying a value</div>
<svg style="position:absolute;left:1899px;top:990px;" width="16" height="16" viewBox="0 0 16 16"><circle cx="8" cy="8" r="6.8" fill="#f4fbff" stroke="#2f4f6a" stroke-width="1.3"/><text x="8" y="12" text-anchor="middle" font-size="10.5" font-weight="bold" fill="#2f4f6a" font-family="Liberation Sans">?</text></svg>
<div class="t" style="left:8.3px;top:1019.84px;font-size:12px;line-height:12px;color:#000;font-weight:normal;letter-spacing:-0.55px;">EHANDBOOK_NAVIGATOR License</div>
<div style="position:absolute;left:2px;top:1011px;width:480px;height:1px;background:#c8c8c8"></div>
<svg style="position:absolute;left:198px;top:1019px;" width="2" height="16" viewBox="0 0 2 16"><path d="M1 0 V16" stroke="#dcdcdc" stroke-width="2" stroke-dasharray="2 2"/></svg>
<div class="t" style="left:205px;top:1019.84px;font-size:12px;line-height:12px;color:#000;font-weight:normal;letter-spacing:-0.25px;">Data Source:</div>
<div style="position:absolute;left:276px;top:1017px;width:206px;height:20px;border:1px solid #c4c4c4;background:#fff;box-sizing:border-box"></div>
<div class="t" style="left:280px;top:1019.84px;font-size:12px;line-height:12px;color:#000;font-weight:normal;letter-spacing:-0.3px;">Measurement and Calibration Files</div>
<svg style="position:absolute;left:467px;top:1024px;" width="8" height="5" viewBox="0 0 8 5"><path d="M0 0 H8 L4 5Z" fill="#222"/></svg>
<svg style="position:absolute;left:491px;top:1019px;" width="14" height="14" viewBox="0 0 14 14"><circle cx="7" cy="7" r="5" fill="#2a2a2a"/><rect x="5.4" y="0" width="3.2" height="3.2" fill="#2a2a2a" transform="rotate(0 7 7)"/><rect x="5.4" y="0" width="3.2" height="3.2" fill="#2a2a2a" transform="rotate(45 7 7)"/><rect x="5.4" y="0" width="3.2" height="3.2" fill="#2a2a2a" transform="rotate(90 7 7)"/><rect x="5.4" y="0" width="3.2" height="3.2" fill="#2a2a2a" transform="rotate(135 7 7)"/><rect x="5.4" y="0" width="3.2" height="3.2" fill="#2a2a2a" transform="rotate(180 7 7)"/><rect x="5.4" y="0" width="3.2" height="3.2" fill="#2a2a2a" transform="rotate(225 7 7)"/><rect x="5.4" y="0" width="3.2" height="3.2" fill="#2a2a2a" transform="rotate(270 7 7)"/><rect x="5.4" y="0" width="3.2" height="3.2" fill="#2a2a2a" transform="rotate(315 7 7)"/><circle cx="7" cy="7" r="1.7" fill="#fff"/></svg>
<svg style="position:absolute;left:512px;top:1019px;" width="17" height="13" viewBox="0 0 17 13"><path d="M1 7 L8 1 L16 5 L9 12 Z" fill="#7ab0e0" stroke="#3a6aa0"/><path d="M1 7 L1 9 L9 14 L16 7 V5 L9 12Z" fill="#3a78b8"/></svg>
<div style="position:absolute;left:534px;top:1017px;width:1px;height:19px;background:#808080"></div>
<svg style="position:absolute;left:544px;top:1019px;" width="16" height="16" viewBox="0 0 16 16"><rect x="2.5" y="0.5" width="12" height="9" fill="#f4fbfb" stroke="#1f4f66" stroke-width="1.1"/><path d="M5.5 2.5v5 M8.5 2.5v5 M11.5 2.5v5" stroke="#1f4f66" stroke-width="1.1"/><circle cx="5.5" cy="4" r="1.3" fill="#1f4f66"/><path d="M10.3 3h2.4" stroke="#1f4f66" stroke-width="1.2"/><rect x="0.5" y="9.5" width="13" height="5" fill="#fff" stroke="#1f6080" stroke-width="1.1"/><path d="M3 11.5v3 M6 11.5v3 M9 11.5v3 M11.5 11.5v3" stroke="#1f6080"/></svg>
<svg style="position:absolute;left:567px;top:1019px;" width="16" height="16" viewBox="0 0 16 16"><rect x="2.5" y="0.5" width="11" height="8" fill="none" stroke="#a8a8a8"/><path d="M5.5 2v5 M8 2v5 M10.5 2v5" stroke="#a8a8a8"/><rect x="0.5" y="8.5" width="9" height="6" fill="none" stroke="#a8a8a8"/><circle cx="11.5" cy="11.5" r="3.5" fill="#ddd" stroke="#a8a8a8"/></svg>
<svg style="position:absolute;left:590px;top:1019px;" width="16" height="16" viewBox="0 0 16 16"><rect x="5.5" y="0.5" width="10" height="8" fill="none" stroke="#a8a8a8"/><path d="M8 2.5v4 M11 2.5v4" stroke="#a8a8a8"/><path d="M0.5 14.5 V5.5 H5.5 V10.5 H15.5" fill="none" stroke="#a8a8a8" stroke-width="1.2"/></svg>
<svg style="position:absolute;left:613px;top:1020px;" width="13" height="13" viewBox="0 0 13 13"><path d="M1 1 L12 6.5 L1 12Z" fill="#a8a8a8"/></svg>
<svg style="position:absolute;left:637px;top:1020px;" width="12" height="12" viewBox="0 0 12 12"><rect x="0.5" y="0.5" width="11" height="11" fill="#b4b4b4" stroke="#a0a0a0"/><path d="M1 2.5 H11" stroke="#eee"/></svg>
<svg style="position:absolute;left:656px;top:1018px;" width="2" height="16" viewBox="0 0 2 16"><path d="M1 0 V16" stroke="#dcdcdc" stroke-width="2" stroke-dasharray="2 2"/></svg>
<svg style="position:absolute;left:1750px;top:1019px;" width="2" height="14" viewBox="0 0 2 14"><path d="M1 0 V14" stroke="#dcdcdc" stroke-width="2" stroke-dasharray="2 2"/></svg>
<svg style="position:absolute;left:1758px;top:1019px;" width="15" height="15" viewBox="0 0 15 15"><rect x="0.5" y="0.5" width="14" height="14" fill="#f8f8f8" stroke="#444"/><path d="M3 4.5h9 M3 6.5h9 M3 8.5h9 M3 10.5h5" stroke="#7a7a7a"/></svg>
<div style="position:absolute;left:1777px;top:1015px;width:23px;height:21px;background:#cce4f7;border:1px solid #a8cdec;box-sizing:border-box"></div>
<svg style="position:absolute;left:1781px;top:1019px;" width="15" height="15" viewBox="0 0 15 15"><rect x="0.5" y="0.5" width="14" height="14" fill="#f8f8f8" stroke="#444"/><rect x="1" y="1" width="5" height="13" fill="#999"/><path d="M8 4.5h5 M8 6.5h5 M8 8.5h5 M8 10.5h2" stroke="#7a7a7a"/></svg>
<svg style="position:absolute;left:1804px;top:1019px;" width="15" height="15" viewBox="0 0 15 15"><rect x="0.5" y="0.5" width="14" height="14" fill="#f8f8f8" stroke="#444"/><circle cx="9" cy="7" r="2.3" fill="#8aaad0"/><path d="M5 14 Q5 9.5 9 9.5 Q13 9.5 13 14Z" fill="#c8d4e4" stroke="#8a9ab0"/></svg>
<div style="position:absolute;left:1826px;top:1015px;width:1px;height:22px;background:#999"></div>
<svg style="position:absolute;left:1833px;top:1025px;" width="13" height="3" viewBox="0 0 13 3"><rect x="0" y="0" width="12" height="3" fill="#22336a"/></svg>
<svg style="position:absolute;left:1856px;top:1020px;" width="13" height="13" viewBox="0 0 13 13"><rect x="0" y="5" width="12" height="3" fill="#22336a"/><rect x="4.5" y="0" width="3" height="12" fill="#22336a"/></svg>
<svg style="position:absolute;left:1879px;top:1019px;" width="12" height="15" viewBox="0 0 12 15"><text x="6" y="6.5" text-anchor="middle" font-size="7" fill="#999" font-family="Liberation Sans" textLength="11" lengthAdjust="spacingAndGlyphs">100</text><text x="6" y="14.5" text-anchor="middle" font-size="9" fill="#999" font-family="Liberation Sans">%</text></svg>
<svg style="position:absolute;left:1902px;top:1019px;" width="14" height="14" viewBox="0 0 14 14"><path d="M1 5 V1 H5 M1 1 L5.5 5.5 M9 1 H13 V5 M13 1 L8.5 5.5 M1 9 V13 H5 M1 13 L5.5 8.5 M13 9 V13 H9 M13 13 L8.5 8.5" stroke="#22336a" stroke-width="1.8" fill="none"/></svg>
<div style="position:absolute;left:483px;top:108px;width:1433px;height:872px;overflow:hidden"><svg style="position:absolute;left:-483px;top:-108px" width="1920" height="1040" viewBox="0 0 1920 1040"><path d="M815 212.5 H1192.4" fill="none" stroke="#111" stroke-width="2" stroke-dasharray="5 2"/><path d="M1192.4 213 H1559.5" fill="none" stroke="#777" stroke-width="2" stroke-dasharray="5 2"/><path d="M1559.5 213 Q1562.5 213 1562.5 216" fill="none" stroke="#000" stroke-width="1.3"/><path d="M1562.5 216 V592" fill="none" stroke="#000" stroke-width="1.3" stroke-dasharray="5 2"/><path d="M1559.0 589.5 L1562.5 594 L1566.0 589.5Z" fill="#000"/><path d="M1192.4 212.5 V690 Q1192.4 693 1195.4 693 H1226" fill="none" stroke="#000" stroke-width="1.3" stroke-dasharray="5 2"/><path d="M1195.4 693 H1226" fill="none" stroke="#777" stroke-width="2" stroke-dasharray="5 2"/><path d="M1225.5 689.5 L1230 693 L1225.5 696.5Z" fill="#000"/><path d="M1192.4 207.5 L1197.0 212.5 L1192.4 217.5 L1187.8000000000002 212.5Z" fill="#000"/><path d="M1192.4 378 L1197.0 383 L1192.4 388 L1187.8000000000002 383Z" fill="#000"/><path d="M1192.4 383 H1226" fill="none" stroke="#777" stroke-width="2" stroke-dasharray="5 2"/><path d="M1225.5 379.5 L1230 383 L1225.5 386.5Z" fill="#000"/><path d="M815 283 H916" fill="none" stroke="#777" stroke-width="2" stroke-dasharray="5 2"/><path d="M915.5 279.5 L920 283 L915.5 286.5Z" fill="#000"/><path d="M940.5 283 H959 Q962 283 962 286 V310 Q962 313 965 313 H976" fill="none" stroke="#000" stroke-width="1.3" stroke-dasharray="5 2"/><path d="M940.5 283 H959" fill="none" stroke="#777" stroke-width="2" stroke-dasharray="5 2"/><path d="M965 313 H976" fill="none" stroke="#777" stroke-width="2" stroke-dasharray="5 2"/><path d="M976.0 309.5 L980.5 313 L976.0 316.5Z" fill="#000"/><path d="M815 323 H976" fill="none" stroke="#777" stroke-width="2" stroke-dasharray="5 2"/><path d="M976.0 319.5 L980.5 323 L976.0 326.5Z" fill="#000"/><path d="M815 363 H916" fill="none" stroke="#777" stroke-width="2" stroke-dasharray="5 2"/><path d="M915.5 359.5 L920 363 L915.5 366.5Z" fill="#000"/><path d="M940.5 363 H959 Q962 363 962 360 V336 Q962 333 965 333 H976" fill="none" stroke="#000" stroke-width="1.3" stroke-dasharray="5 2"/><path d="M940.5 363 H959" fill="none" stroke="#777" stroke-width="2" stroke-dasharray="5 2"/><path d="M965 333 H976" fill="none" stroke="#777" stroke-width="2" stroke-dasharray="5 2"/><path d="M976.0 329.5 L980.5 333 L976.0 336.5Z" fill="#000"/><path d="M1000.5 323 H1101" fill="none" stroke="#777" stroke-width="2" stroke-dasharray="5 2"/><path d="M1100.5 319.5 L1105 323 L1100.5 326.5Z" fill="#000"/><path d="M1135 323 H1202.5" fill="none" stroke="#111" stroke-width="2" stroke-dasharray="5 2"/><path d="M1202.5 318 L1207.1 323 L1202.5 328 L1197.9 323Z" fill="#000"/><path d="M1202.5 323 H1336" fill="none" stroke="#777" stroke-width="2" stroke-dasharray="5 2"/><path d="M1336.0 319.5 L1340.5 323 L1336.0 326.5Z" fill="#000"/><path d="M1360.5 323 H1549" fill="none" stroke="#777" stroke-width="2" stroke-dasharray="5 2"/><path d="M1549 323 Q1552.3 323 1552.3 326" fill="none" stroke="#000" stroke-width="1.3"/><path d="M1552.3 326 V592" fill="none" stroke="#000" stroke-width="1.3" stroke-dasharray="5 2"/><path d="M1548.8 589.5 L1552.3 594 L1555.8 589.5Z" fill="#000"/><path d="M1202.5 323 V670 Q1202.5 673 1205.5 673 H1226" fill="none" stroke="#000" stroke-width="1.3" stroke-dasharray="5 2"/><path d="M1205.5 673 H1226" fill="none" stroke="#777" stroke-width="2" stroke-dasharray="5 2"/><path d="M1225.5 669.5 L1230 673 L1225.5 676.5Z" fill="#000"/><path d="M1202.5 388 L1207.1 393 L1202.5 398 L1197.9 393Z" fill="#000"/><path d="M1202.5 393 H1226" fill="none" stroke="#777" stroke-width="2" stroke-dasharray="5 2"/><path d="M1225.5 389.5 L1230 393 L1225.5 396.5Z" fill="#000"/><path d="M815 443 H932.5" fill="none" stroke="#111" stroke-width="2"/><path d="M932.5 443 H1100 Q1104 443 1104 447 V449 Q1104 453 1108 453 H1146" fill="none" stroke="#6a6a6a" stroke-width="2"/><path d="M1146.0 449.5 L1150.5 453 L1146.0 456.5Z" fill="#000"/><path d="M932.5 438 L937.1 443 L932.5 448 L927.9 443Z" fill="#000"/><path d="M932.5 443 V749 Q932.5 753 936.5 753 H1226" fill="none" stroke="#000" stroke-width="1.3"/><path d="M936.5 753 H1226" fill="none" stroke="#777" stroke-width="2"/><path d="M1225.5 749.5 L1230 753 L1225.5 756.5Z" fill="#000"/><path d="M815 483 H1100 Q1104 483 1104 479 V475 Q1104 471 1108 471 H1146" fill="none" stroke="#222" stroke-width="2"/><path d="M1146.0 467.5 L1150.5 471 L1146.0 474.5Z" fill="#000"/><path d="M913 483 V769 Q913 773 917 773 H1226" fill="none" stroke="#000" stroke-width="1.3"/><path d="M917 773 H1226" fill="none" stroke="#777" stroke-width="2"/><path d="M1225.5 769.5 L1230 773 L1225.5 776.5Z" fill="#000"/><path d="M1170.5 463 H1226" fill="none" stroke="#777" stroke-width="2" stroke-dasharray="5 2"/><path d="M1225.5 459.5 L1230 463 L1225.5 466.5Z" fill="#000"/><path d="M805 532.5 H1226" fill="none" stroke="#555" stroke-width="2"/><path d="M1225.5 529.0 L1230 532.5 L1225.5 536.0Z" fill="#000"/><path d="M893 532.5 V789 Q893 793 897 793 H1226" fill="none" stroke="#000" stroke-width="1.3"/><path d="M897 793 H1226" fill="none" stroke="#777" stroke-width="2"/><path d="M1225.5 789.5 L1230 793 L1225.5 796.5Z" fill="#000"/><path d="M962 532.5 V577 Q962 581 966 581 H1072" fill="none" stroke="#000" stroke-width="1.3"/><path d="M966 581 H1072" fill="none" stroke="#777" stroke-width="2"/><path d="M1023 602 H1072" fill="none" stroke="#777" stroke-width="2"/><path d="M1092 590 H1128 V558 H1132" fill="none" stroke="#777" stroke-width="2"/><path d="M1059 552.5 H1132" fill="none" stroke="#777" stroke-width="2"/><path d="M1150 553 H1182" fill="none" stroke="#111" stroke-width="2"/><path d="M1182 553 H1226" fill="none" stroke="#777" stroke-width="2"/><path d="M1225.5 549.5 L1230 553 L1225.5 556.5Z" fill="#000"/><path d="M1182.5 548 L1187.1 553 L1182.5 558 L1177.9 553Z" fill="#000"/><path d="M1182.5 553 V729 Q1182.5 733 1186.5 733 H1226" fill="none" stroke="#000" stroke-width="1.3"/><path d="M1186.5 733 H1226" fill="none" stroke="#777" stroke-width="2"/><path d="M1225.5 729.5 L1230 733 L1225.5 736.5Z" fill="#000"/><path d="M805 813 H1226" fill="none" stroke="#555" stroke-width="2"/><path d="M1225.5 809.5 L1230 813 L1225.5 816.5Z" fill="#000"/><path d="M1410 603 H1531" fill="none" stroke="#555" stroke-width="2"/><path d="M1531.0 599.5 L1535.5 603 L1531.0 606.5Z" fill="#000"/><path d="M1410 893 H1438.3 Q1442.3 893 1442.3 889 V617 Q1442.3 613 1446.3 613 H1531" fill="none" stroke="#444" stroke-width="1.3"/><path d="M1410 893 H1438" fill="none" stroke="#555" stroke-width="2"/><path d="M1446 613 H1531" fill="none" stroke="#555" stroke-width="2"/><path d="M1531.0 609.5 L1535.5 613 L1531.0 616.5Z" fill="#000"/><path d="M1490.3 633 H1508 Q1512 633 1512 629 V627 Q1512 623 1516 623 H1531" fill="none" stroke="#555" stroke-width="2"/><path d="M1531.0 619.5 L1535.5 623 L1531.0 626.5Z" fill="#000"/><path d="M1565.5 613 H1621" fill="none" stroke="#555" stroke-width="2"/><path d="M1620.5 609.5 L1625 613 L1620.5 616.5Z" fill="#000"/><path d="M1655 613 H1663" fill="none" stroke="#555" stroke-width="2"/><rect x="785.75" y="207.75" width="29.5" height="9.5" fill="#fff" stroke="#555" stroke-width="1.5"/><rect x="785" y="207.0" width="5.5" height="11" fill="#000"/><path d="M803 208.0 L807.5 212.5 L803 217.0 L798.5 212.5Z" fill="#bcd4f2" stroke="#6f96c8" stroke-width="1.1"/><rect x="785.75" y="278.25" width="19.5" height="9.5" fill="#fff" stroke="#555" stroke-width="1.5"/><rect x="791" y="278.5" width="9" height="9" fill="#f6f0f6" stroke="#b8b0cc" stroke-width="0.8"/><path d="M791.4 279.5 L799.6 287.1 H791.4Z" fill="#d9807a"/><path d="M805 277.5 L815 283 L805 288.5Z" fill="#000"/><rect x="785.75" y="317.75" width="29.5" height="9.5" fill="#fff" stroke="#555" stroke-width="1.5"/><rect x="785" y="317.0" width="5.5" height="11" fill="#000"/><path d="M803 318.0 L807.5 322.5 L803 327.0 L798.5 322.5Z" fill="#bcd4f2" stroke="#6f96c8" stroke-width="1.1"/><rect x="785.75" y="358.25" width="19.5" height="9.5" fill="#fff" stroke="#555" stroke-width="1.5"/><rect x="791" y="358.5" width="9" height="9" fill="#f6f0f6" stroke="#b8b0cc" stroke-width="0.8"/><path d="M791.4 359.5 L799.6 367.1 H791.4Z" fill="#d9807a"/><path d="M805 357.5 L815 363 L805 368.5Z" fill="#000"/><rect x="785.75" y="438.25" width="19.5" height="9.5" fill="#fff" stroke="#555" stroke-width="1.5"/><rect x="791" y="438.5" width="9" height="9" fill="#f6f0f6" stroke="#b8b0cc" stroke-width="0.8"/><path d="M791.4 439.5 L799.6 447.1 H791.4Z" fill="#d9807a"/><path d="M805 437.5 L815 443 L805 448.5Z" fill="#000"/><rect x="785.75" y="478.25" width="19.5" height="9.5" fill="#fff" stroke="#555" stroke-width="1.5"/><rect x="791" y="478.5" width="9" height="9" fill="#f6f0f6" stroke="#b8b0cc" stroke-width="0.8"/><path d="M791.4 479.5 L799.6 487.1 H791.4Z" fill="#d9807a"/><path d="M805 477.5 L815 483 L805 488.5Z" fill="#000"/><rect x="775.75" y="527.75" width="19.5" height="9.5" fill="#fff" stroke="#555" stroke-width="1.5"/><rect x="781" y="528.0" width="9" height="9" fill="#f6f0f6" stroke="#b8b0cc" stroke-width="0.8"/><path d="M781.4 529.0 L789.6 536.6 H781.4Z" fill="#d9807a"/><path d="M795 527.0 L805 532.5 L795 538.0Z" fill="#000"/><rect x="775.75" y="807.75" width="19.5" height="9.5" fill="#fff" stroke="#555" stroke-width="1.5"/><rect x="781" y="808.0" width="9" height="9" fill="#f6f0f6" stroke="#b8b0cc" stroke-width="0.8"/><path d="M781.4 809.0 L789.6 816.6 H781.4Z" fill="#d9807a"/><path d="M795 807.0 L805 812.5 L795 818.0Z" fill="#000"/><rect x="1105.75" y="318.25" width="19.5" height="9.5" fill="#fff" stroke="#555" stroke-width="1.5"/><rect x="1105" y="317.5" width="5.5" height="11" fill="#000"/><rect x="1114" y="318.5" width="9" height="9" fill="#f6f0f6" stroke="#b8b0cc" stroke-width="0.8"/><path d="M1114.4 318.9 H1122.6 V326.5Z" fill="#e07a62"/><path d="M1125.5 318 L1134.5 323 L1125.5 328Z" fill="#fff" stroke="#000" stroke-width="1"/><rect x="1625.75" y="608.25" width="19.5" height="9.5" fill="#fff" stroke="#555" stroke-width="1.5"/><rect x="1625" y="607.5" width="5.5" height="11" fill="#000"/><rect x="1634" y="608.5" width="9" height="9" fill="#f6f0f6" stroke="#b8b0cc" stroke-width="0.8"/><path d="M1634.4 608.9 H1642.6 V616.5Z" fill="#e07a62"/><path d="M1645 607.5 L1655 613 L1645 618.5Z" fill="#000"/><rect x="920.25" y="272.5" width="20.25" height="20.5" fill="#fff" stroke="#4a4a4a" stroke-width="1.5"/><rect x="929" y="277.8" width="3.2" height="8" fill="#5a5a92"/><rect x="929" y="287.5" width="3.2" height="2.2" fill="#5a5a92"/><rect x="920.25" y="352.75" width="20.25" height="20.25" fill="#fff" stroke="#4a4a4a" stroke-width="1.5"/><rect x="929" y="358.05" width="3.2" height="8" fill="#5a5a92"/><rect x="929" y="367.75" width="3.2" height="2.2" fill="#5a5a92"/><rect x="1340.5" y="313.2" width="20.0" height="19.5" fill="#fff" stroke="#4a4a4a" stroke-width="1.5"/><rect x="1349" y="318.5" width="3.2" height="8" fill="#5a5a92"/><rect x="1349" y="328.2" width="3.2" height="2.2" fill="#5a5a92"/><rect x="980.5" y="303.75" width="20.0" height="38.25" fill="#fff" stroke="#4a4a4a" stroke-width="1.5"/><text x="990.5" y="328.5" text-anchor="middle" font-size="12" font-weight="bold" fill="#5a5a9a" font-family="Liberation Sans">&amp;</text><rect x="1150.5" y="447.5" width="20.0" height="29.5" fill="#fff" stroke="#4a4a4a" stroke-width="1.5"/><path d="M1164 455 L1155 461.5 L1164 468" fill="none" stroke="#6a6aa8" stroke-width="2.2"/><rect x="1022" y="547" width="37" height="11" fill="#fff" stroke="#4a4a4a" stroke-width="1.5"/><rect x="981" y="596" width="42" height="13" fill="#fff" stroke="#4a4a4a" stroke-width="1.5"/><rect x="1072" y="570" width="20" height="36" fill="#fff" stroke="#4a4a4a" stroke-width="1.5"/><rect x="1132" y="544" width="18" height="19" fill="#fff" stroke="#4a4a4a" stroke-width="1.5"/><rect x="1535.2" y="593.75" width="30.399999999999864" height="38.450000000000045" fill="#fff" stroke="#4a4a4a" stroke-width="1.5"/><rect x="1541" y="607" width="4" height="4" fill="none" stroke="#3aa03a" stroke-width="1.3"/><path d="M1547 608 H1549 L1555 615 H1558" fill="none" stroke="#2a9a2a" stroke-width="2"/><rect x="1541" y="617" width="4" height="4" fill="#8a8ad0" stroke="#7070b0" stroke-width="0.8"/><rect x="1450.3" y="624.7" width="40.0" height="16.299999999999955" fill="#fff" stroke="#4a4a4a" stroke-width="1.5"/><text x="1470.3" y="637" text-anchor="middle" font-size="11" fill="#2a2a9a" font-family="Liberation Sans">1.0</text><rect x="1231" y="368.5" width="179" height="259.5" fill="#fff"/><path d="M1231 368.5 V628 M1410 368.5 V628" stroke="#767676" stroke-width="2" fill="none"/><path d="M1230 368.5 H1411 M1230 628 H1411" stroke="#111" stroke-width="1.5" fill="none"/><path d="M1234 371.5 V625 M1407 371.5 V625" stroke="#767676" stroke-width="2" fill="none"/><path d="M1233 371.5 H1408 M1233 625 H1408" stroke="#111" stroke-width="1.5" fill="none"/><rect x="1222.6" y="362.3" width="19" height="14.5" rx="4" fill="#fff" stroke="#333" stroke-width="1.3"/><path d="M1232.1 365.3 V373.8 M1227.6 369.5 H1236.6" stroke="#000" stroke-width="3"/><rect x="1231" y="658.3" width="179" height="259.0" fill="#fff"/><path d="M1231 658.3 V917.3 M1410 658.3 V917.3" stroke="#767676" stroke-width="2" fill="none"/><path d="M1230 658.3 H1411 M1230 917.3 H1411" stroke="#111" stroke-width="1.5" fill="none"/><path d="M1234 661.3 V914.3 M1407 661.3 V914.3" stroke="#767676" stroke-width="2" fill="none"/><path d="M1233 661.3 H1408 M1233 914.3 H1408" stroke="#111" stroke-width="1.5" fill="none"/><rect x="1222.6" y="652.0999999999999" width="19" height="14.5" rx="4" fill="#fff" stroke="#333" stroke-width="1.3"/><path d="M1232.1 655.0999999999999 V663.5999999999999 M1227.6 659.3 H1236.6" stroke="#000" stroke-width="3"/><text x="795.8" y="227.8" text-anchor="start" font-size="10.5" fill="#26266c" font-family="Liberation Sans" textLength="132.8" lengthAdjust="spacingAndGlyphs">Lcc_flgSwitch2PIDController</text><text x="761.25" y="297.5" text-anchor="start" font-size="10.5" fill="#26266c" font-family="Liberation Sans" textLength="81.8" lengthAdjust="spacingAndGlyphs">Isc_flgFuelCutoff</text><text x="764.8" y="337.5" text-anchor="start" font-size="10.5" fill="#26266c" font-family="Liberation Sans" textLength="134.1" lengthAdjust="spacingAndGlyphs">Lcc_flgLambdaControlActive</text><text x="750.2" y="377.7" text-anchor="start" font-size="10.5" fill="#26266c" font-family="Liberation Sans" textLength="103.4" lengthAdjust="spacingAndGlyphs">Stc_flgFuelCorrActive</text><text x="783" y="457.5" text-anchor="start" font-size="10.5" fill="#26266c" font-family="Liberation Sans" textLength="38" lengthAdjust="spacingAndGlyphs">Lamsoni</text><text x="756" y="497.5" text-anchor="start" font-size="10.5" fill="#26266c" font-family="Liberation Sans" textLength="87" lengthAdjust="spacingAndGlyphs">Afr_facLambdaReq</text><rect x="752" y="537" width="63" height="13.6" fill="#cce8ff"/><text x="752" y="547.5" text-anchor="start" font-size="10.5" fill="#26266c" font-family="Liberation Sans" textLength="79" lengthAdjust="spacingAndGlyphs">Epm_rpmEngSpd</text><text x="759" y="827" text-anchor="start" font-size="10.5" fill="#26266c" font-family="Liberation Sans" textLength="68" lengthAdjust="spacingAndGlyphs">Mpc_pManiFilt</text><text x="1034" y="307" text-anchor="start" font-size="10.5" fill="#333" font-family="Liberation Sans" textLength="53.5" lengthAdjust="spacingAndGlyphs">/1/Lcc_calc</text><text x="1049.6" y="338" text-anchor="start" font-size="10.5" fill="#26266c" font-family="Liberation Sans" textLength="142.4" lengthAdjust="spacingAndGlyphs">Lcc_flgLambdacontrolActive_1</text><text x="1574.7" y="597.3" text-anchor="start" font-size="10.5" fill="#333" font-family="Liberation Sans" textLength="52.6" lengthAdjust="spacingAndGlyphs">/6/Lcc_calc</text><text x="1596" y="627.8" text-anchor="start" font-size="10.5" fill="#26266c" font-family="Liberation Sans" textLength="92.75" lengthAdjust="spacingAndGlyphs">Lcc_facLambdaCorr</text><text x="1236" y="385.4" text-anchor="start" font-size="10.5" fill="#26266c" font-family="Liberation Sans" textLength="133" lengthAdjust="spacingAndGlyphs">Lcc_flgSwitch2PIDController</text><text x="1236" y="394.9" text-anchor="start" font-size="10.5" fill="#26266c" font-family="Liberation Sans" textLength="9" lengthAdjust="spacingAndGlyphs">in</text><text x="1273.8" y="447.9" text-anchor="start" font-size="10.5" fill="#26266c" font-family="Liberation Sans" textLength="96.8" lengthAdjust="spacingAndGlyphs">Two-point-controller</text><text x="1236" y="464.5" text-anchor="start" font-size="10.5" fill="#26266c" font-family="Liberation Sans" textLength="15" lengthAdjust="spacingAndGlyphs">in1</text><text x="1236" y="535.1" text-anchor="start" font-size="10.5" fill="#26266c" font-family="Liberation Sans" textLength="79.5" lengthAdjust="spacingAndGlyphs">Epm_rpmEngSpd</text><text x="1236" y="554.6" text-anchor="start" font-size="10.5" fill="#26266c" font-family="Liberation Sans" textLength="9" lengthAdjust="spacingAndGlyphs">dt</text><text x="1295.6" y="605.3" text-anchor="start" font-size="10.5" fill="#26266c" font-family="Liberation Sans" textLength="112.3" lengthAdjust="spacingAndGlyphs">Lcc_facLambdaTPCCorr</text><text x="1236" y="674.4" text-anchor="start" font-size="10.5" fill="#26266c" font-family="Liberation Sans" textLength="9" lengthAdjust="spacingAndGlyphs">in</text><text x="1236" y="694.7" text-anchor="start" font-size="10.5" fill="#26266c" font-family="Liberation Sans" textLength="133" lengthAdjust="spacingAndGlyphs">Lcc_flgSwitch2PIDController</text><text x="1288" y="717.7" text-anchor="start" font-size="10.5" fill="#26266c" font-family="Liberation Sans" textLength="67.7" lengthAdjust="spacingAndGlyphs">PID-Controller</text><text x="1236" y="735" text-anchor="start" font-size="10.5" fill="#26266c" font-family="Liberation Sans" textLength="9" lengthAdjust="spacingAndGlyphs">dt</text><text x="1236" y="755" text-anchor="start" font-size="10.5" fill="#26266c" font-family="Liberation Sans" textLength="38" lengthAdjust="spacingAndGlyphs">Lamsoni</text><text x="1236" y="775" text-anchor="start" font-size="10.5" fill="#26266c" font-family="Liberation Sans" textLength="93" lengthAdjust="spacingAndGlyphs">Afr_facLambdaReq</text><text x="1236" y="795" text-anchor="start" font-size="10.5" fill="#26266c" font-family="Liberation Sans" textLength="79.5" lengthAdjust="spacingAndGlyphs">Epm_rpmEngSpd</text><text x="1236" y="814.5" text-anchor="start" font-size="10.5" fill="#26266c" font-family="Liberation Sans" textLength="66.5" lengthAdjust="spacingAndGlyphs">Mpc_pManiFilt</text><text x="1271.5" y="894.9" text-anchor="start" font-size="10.5" fill="#26266c" font-family="Liberation Sans" textLength="136.5" lengthAdjust="spacingAndGlyphs">Lcc_facLambdaPIDController</text></svg></div>
<div style="position:absolute;left:53.5px;top:785px;width:372px;height:223.5px;border:1px solid #2a2a3a;border-bottom:2px solid #1a1a2a;border-radius:3px;background:#e4e4f6;box-sizing:border-box;overflow:hidden"></div>
<div style="position:absolute;left:99px;top:785px;width:281px;height:223.5px;background:#c9d3f5;border-left:1.5px solid #3a3f5a;border-right:1.5px solid #3a3f5a;border-top:2px solid #1a1a2a;box-sizing:border-box"></div>
<div style="position:absolute;left:53.5px;top:785px;width:372px;height:224px;overflow:hidden"><svg style="position:absolute;left:-53.5px;top:-785px" width="1920" height="1040" viewBox="0 0 1920 1040"><g transform="translate(-72.7 756.6) scale(0.26)"><path d="M815 212.5 H1192.4" fill="none" stroke="#1c2240" stroke-width="5" stroke-dasharray="14 8"/><path d="M1192.4 213 H1559.5" fill="none" stroke="#1c2240" stroke-width="5" stroke-dasharray="14 8"/><path d="M1559.5 213 Q1562.5 213 1562.5 216" fill="none" stroke="#1c2240" stroke-width="5"/><path d="M1562.5 216 V592" fill="none" stroke="#1c2240" stroke-width="5" stroke-dasharray="14 8"/><path d="M1192.4 212.5 V690 Q1192.4 693 1195.4 693 H1226" fill="none" stroke="#1c2240" stroke-width="5" stroke-dasharray="14 8"/><path d="M1195.4 693 H1226" fill="none" stroke="#1c2240" stroke-width="5" stroke-dasharray="14 8"/><path d="M1192.4 383 H1226" fill="none" stroke="#1c2240" stroke-width="5" stroke-dasharray="14 8"/><path d="M815 283 H916" fill="none" stroke="#1c2240" stroke-width="5" stroke-dasharray="14 8"/><path d="M940.5 283 H959 Q962 283 962 286 V310 Q962 313 965 313 H976" fill="none" stroke="#1c2240" stroke-width="5" stroke-dasharray="14 8"/><path d="M940.5 283 H959" fill="none" stroke="#1c2240" stroke-width="5" stroke-dasharray="14 8"/><path d="M965 313 H976" fill="none" stroke="#1c2240" stroke-width="5" stroke-dasharray="14 8"/><path d="M815 323 H976" fill="none" stroke="#1c2240" stroke-width="5" stroke-dasharray="14 8"/><path d="M815 363 H916" fill="none" stroke="#1c2240" stroke-width="5" stroke-dasharray="14 8"/><path d="M940.5 363 H959 Q962 363 962 360 V336 Q962 333 965 333 H976" fill="none" stroke="#1c2240" stroke-width="5" stroke-dasharray="14 8"/><path d="M940.5 363 H959" fill="none" stroke="#1c2240" stroke-width="5" stroke-dasharray="14 8"/><path d="M965 333 H976" fill="none" stroke="#1c2240" stroke-width="5" stroke-dasharray="14 8"/><path d="M1000.5 323 H1101" fill="none" stroke="#1c2240" stroke-width="5" stroke-dasharray="14 8"/><path d="M1135 323 H1202.5" fill="none" stroke="#1c2240" stroke-width="5" stroke-dasharray="14 8"/><path d="M1202.5 323 H1336" fill="none" stroke="#1c2240" stroke-width="5" stroke-dasharray="14 8"/><path d="M1360.5 323 H1549" fill="none" stroke="#1c2240" stroke-width="5" stroke-dasharray="14 8"/><path d="M1549 323 Q1552.3 323 1552.3 326" fill="none" stroke="#1c2240" stroke-width="5"/><path d="M1552.3 326 V592" fill="none" stroke="#1c2240" stroke-width="5" stroke-dasharray="14 8"/><path d="M1202.5 323 V670 Q1202.5 673 1205.5 673 H1226" fill="none" stroke="#1c2240" stroke-width="5" stroke-dasharray="14 8"/><path d="M1205.5 673 H1226" fill="none" stroke="#1c2240" stroke-width="5" stroke-dasharray="14 8"/><path d="M1202.5 393 H1226" fill="none" stroke="#1c2240" stroke-width="5" stroke-dasharray="14 8"/><path d="M815 443 H932.5" fill="none" stroke="#1c2240" stroke-width="5"/><path d="M932.5 443 H1100 Q1104 443 1104 447 V449 Q1104 453 1108 453 H1146" fill="none" stroke="#1c2240" stroke-width="5"/><path d="M932.5 443 V749 Q932.5 753 936.5 753 H1226" fill="none" stroke="#1c2240" stroke-width="5"/><path d="M936.5 753 H1226" fill="none" stroke="#1c2240" stroke-width="5"/><path d="M815 483 H1100 Q1104 483 1104 479 V475 Q1104 471 1108 471 H1146" fill="none" stroke="#1c2240" stroke-width="5"/><path d="M913 483 V769 Q913 773 917 773 H1226" fill="none" stroke="#1c2240" stroke-width="5"/><path d="M917 773 H1226" fill="none" stroke="#1c2240" stroke-width="5"/><path d="M1170.5 463 H1226" fill="none" stroke="#1c2240" stroke-width="5" stroke-dasharray="14 8"/><path d="M805 532.5 H1226" fill="none" stroke="#1c2240" stroke-width="5"/><path d="M893 532.5 V789 Q893 793 897 793 H1226" fill="none" stroke="#1c2240" stroke-width="5"/><path d="M897 793 H1226" fill="none" stroke="#1c2240" stroke-width="5"/><path d="M962 532.5 V577 Q962 581 966 581 H1072" fill="none" stroke="#1c2240" stroke-width="5"/><path d="M966 581 H1072" fill="none" stroke="#1c2240" stroke-width="5"/><path d="M1023 602 H1072" fill="none" stroke="#1c2240" stroke-width="5"/><path d="M1092 590 H1128 V558 H1132" fill="none" stroke="#1c2240" stroke-width="5"/><path d="M1059 552.5 H1132" fill="none" stroke="#1c2240" stroke-width="5"/><path d="M1150 553 H1182" fill="none" stroke="#1c2240" stroke-width="5"/><path d="M1182 553 H1226" fill="none" stroke="#1c2240" stroke-width="5"/><path d="M1182.5 553 V729 Q1182.5 733 1186.5 733 H1226" fill="none" stroke="#1c2240" stroke-width="5"/><path d="M1186.5 733 H1226" fill="none" stroke="#1c2240" stroke-width="5"/><path d="M805 813 H1226" fill="none" stroke="#1c2240" stroke-width="5"/><path d="M1410 603 H1531" fill="none" stroke="#1c2240" stroke-width="5"/><path d="M1410 893 H1438.3 Q1442.3 893 1442.3 889 V617 Q1442.3 613 1446.3 613 H1531" fill="none" stroke="#1c2240" stroke-width="5"/><path d="M1410 893 H1438" fill="none" stroke="#1c2240" stroke-width="5"/><path d="M1446 613 H1531" fill="none" stroke="#1c2240" stroke-width="5"/><path d="M1490.3 633 H1508 Q1512 633 1512 629 V627 Q1512 623 1516 623 H1531" fill="none" stroke="#1c2240" stroke-width="5"/><path d="M1565.5 613 H1621" fill="none" stroke="#1c2240" stroke-width="5"/><path d="M1655 613 H1663" fill="none" stroke="#1c2240" stroke-width="5"/><rect x="785" y="206.5" width="30" height="12" rx="6" fill="#5a6488" stroke="#1c2240" stroke-width="4"/><rect x="785" y="277" width="30" height="12" rx="6" fill="#9aa4c8" stroke="#1c2240" stroke-width="4"/><rect x="785" y="316.5" width="30" height="12" rx="6" fill="#5a6488" stroke="#1c2240" stroke-width="4"/><rect x="785" y="357" width="30" height="12" rx="6" fill="#9aa4c8" stroke="#1c2240" stroke-width="4"/><rect x="785" y="437" width="30" height="12" rx="6" fill="#9aa4c8" stroke="#1c2240" stroke-width="4"/><rect x="785" y="477" width="30" height="12" rx="6" fill="#9aa4c8" stroke="#1c2240" stroke-width="4"/><rect x="775" y="526.5" width="30" height="12" rx="6" fill="#9aa4c8" stroke="#1c2240" stroke-width="4"/><rect x="775" y="806.5" width="30" height="12" rx="6" fill="#9aa4c8" stroke="#1c2240" stroke-width="4"/><rect x="1105" y="317" width="30" height="12" rx="6" fill="#9aa4c8" stroke="#1c2240" stroke-width="4"/><rect x="1625" y="607" width="30" height="12" rx="6" fill="#9aa4c8" stroke="#1c2240" stroke-width="4"/><rect x="920.25" y="272.5" width="20.25" height="20.5" fill="#e4e4f6" stroke="#1c2240" stroke-width="5"/><rect x="920.25" y="352.75" width="20.25" height="20.25" fill="#e4e4f6" stroke="#1c2240" stroke-width="5"/><rect x="1340.5" y="313.2" width="20.0" height="19.5" fill="#e4e4f6" stroke="#1c2240" stroke-width="5"/><rect x="980.5" y="303.75" width="20.0" height="38.25" fill="#e4e4f6" stroke="#1c2240" stroke-width="5"/><rect x="1150.5" y="447.5" width="20.0" height="29.5" fill="#e4e4f6" stroke="#1c2240" stroke-width="5"/><rect x="1022" y="547" width="37" height="11" fill="#e4e4f6" stroke="#1c2240" stroke-width="5"/><rect x="981" y="596" width="42" height="13" fill="#e4e4f6" stroke="#1c2240" stroke-width="5"/><rect x="1072" y="570" width="20" height="36" fill="#e4e4f6" stroke="#1c2240" stroke-width="5"/><rect x="1132" y="544" width="18" height="19" fill="#e4e4f6" stroke="#1c2240" stroke-width="5"/><rect x="1535.2" y="593.75" width="30.399999999999864" height="38.450000000000045" fill="#e4e4f6" stroke="#1c2240" stroke-width="5"/><rect x="1450.3" y="624.7" width="40.0" height="16.299999999999955" fill="#e4e4f6" stroke="#1c2240" stroke-width="5"/><rect x="1231" y="368.5" width="179" height="259.5" fill="#e6e6f8" stroke="#1c2240" stroke-width="8"/><circle cx="1233" cy="370.5" r="12" fill="#5a6488" stroke="#1c2240" stroke-width="4"/><rect x="1231" y="658.3" width="179" height="259.0" fill="#e6e6f8" stroke="#1c2240" stroke-width="8"/><circle cx="1233" cy="660.3" r="12" fill="#5a6488" stroke="#1c2240" stroke-width="4"/></g></svg></div>
<svg style="position:absolute;left:96px;top:783px;" width="7" height="7" viewBox="0 0 7 7"><circle cx="3.5" cy="3.5" r="2.6" fill="#666" stroke="#111" stroke-width="1.2"/></svg>
<div style="position:absolute;left:1161px;top:472px;width:3px;height:568px;background:linear-gradient(to right,rgba(0,0,0,0.45),rgba(0,0,0,0.08))"></div>
<div style="position:absolute;left:815px;top:465px;width:346px;height:600px;background:#f2f2f2;border:1px solid #cccccc;box-sizing:border-box"></div>
<svg style="position:absolute;left:822px;top:471px;" width="16" height="16" viewBox="0 0 16 16"><rect x="2.5" y="0.5" width="12" height="9" fill="#eef8f8" stroke="#1f6a80" stroke-width="1.2"/><path d="M5.5 2v6 M8.5 2v6 M11.5 2v6" stroke="#1f5f70" stroke-width="1.2"/><circle cx="5.5" cy="4" r="1.2" fill="#1f5f70"/><path d="M10.5 3h2" stroke="#1f5f70"/><rect x="0.5" y="8.5" width="14" height="6" fill="#fff" stroke="#1f5a78" stroke-width="1.3"/><path d="M3 11v3 M6 11v3 M9 11v3 M12 11v3" stroke="#1f5a78"/></svg>
<div class="t" style="left:850.5px;top:473.14px;font-size:12px;line-height:12px;color:#000;font-weight:normal;letter-spacing:-0.2px;">Display Value</div>
<svg style="position:absolute;left:822px;top:493px;" width="16" height="16" viewBox="0 0 16 16"><rect x="2.5" y="0.5" width="12" height="9" fill="none" stroke="#a8a8a8"/><path d="M5.5 2v6 M8.5 2v6 M11.5 2v6" stroke="#a8a8a8"/><rect x="0.5" y="8.5" width="8" height="6" fill="none" stroke="#a8a8a8"/><circle cx="11" cy="11.5" r="4" fill="#d8d8d8" stroke="#a8a8a8"/><path d="M8.5 9 L13.5 14 M13.5 9 L8.5 14" stroke="#999"/></svg>
<div class="t" style="left:850.5px;top:495.14px;font-size:12px;line-height:12px;color:#6d6d6d;font-weight:normal;letter-spacing:-0.2px;">Hide Value</div>
<div style="position:absolute;left:846px;top:515px;width:312px;height:1px;background:#cdcdcd"></div>
<div style="position:absolute;left:846px;top:516px;width:312px;height:1px;background:#fbfbfb"></div>
<div class="t" style="left:850.5px;top:524.14px;font-size:12px;line-height:12px;color:#000;font-weight:normal;letter-spacing:-0.2px;">Set as Reference (for previous/next values)</div>
<div class="t" style="left:850.5px;top:546.14px;font-size:12px;line-height:12px;color:#6d6d6d;font-weight:normal;letter-spacing:-0.2px;">Clear Reference</div>
<div class="t" style="left:850.5px;top:568.14px;font-size:12px;line-height:12px;color:#000;font-weight:normal;letter-spacing:-0.2px;">Copy</div>
<div style="position:absolute;left:846px;top:588px;width:312px;height:1px;background:#cdcdcd"></div>
<div style="position:absolute;left:846px;top:589px;width:312px;height:1px;background:#fbfbfb"></div>
<div class="t" style="left:850.5px;top:597.14px;font-size:12px;line-height:12px;color:#000;font-weight:normal;letter-spacing:-0.2px;">Find in EHANDBOOK File(s)</div>
<div class="t" style="left:850.5px;top:619.14px;font-size:12px;line-height:12px;color:#000;font-weight:normal;letter-spacing:-0.2px;">Find in current tab</div>
<div style="position:absolute;left:846px;top:639px;width:312px;height:1px;background:#cdcdcd"></div>
<div style="position:absolute;left:846px;top:640px;width:312px;height:1px;background:#fbfbfb"></div>
<svg style="position:absolute;left:824px;top:646px;" width="12" height="15" viewBox="0 0 12 15"><path d="M0.5 0.5 H8 L11.5 4 V14.5 H0.5 Z" fill="#f8f8f8" stroke="#c4c4c4"/><path d="M2.5 5h7 M2.5 7.5h7 M2.5 10h7" stroke="#d0d0d0"/></svg>
<div class="t" style="left:850.5px;top:648.14px;font-size:12px;line-height:12px;color:#6d6d6d;font-weight:normal;letter-spacing:-0.2px;">Show Documentation</div>
<svg style="position:absolute;left:824px;top:668px;" width="12" height="15" viewBox="0 0 12 15"><path d="M0.5 0.5 H8 L11.5 4 V14.5 H0.5 Z" fill="#f8f8f8" stroke="#c4c4c4"/><path d="M2.5 5h7 M2.5 7.5h7 M2.5 10h7" stroke="#d0d0d0"/></svg>
<div class="t" style="left:850.5px;top:670.14px;font-size:12px;line-height:12px;color:#6d6d6d;font-weight:normal;letter-spacing:-0.2px;">Show Documentation in New Tab</div>
<div style="position:absolute;left:846px;top:690px;width:312px;height:1px;background:#cdcdcd"></div>
<div style="position:absolute;left:846px;top:691px;width:312px;height:1px;background:#fbfbfb"></div>
<svg style="position:absolute;left:822px;top:697px;" width="16" height="16" viewBox="0 0 16 16"><path d="M3 14 Q6 4 13 2 M4 4 Q9 7 12 11" stroke="#a8a8a8" stroke-width="1.2" fill="none"/><circle cx="5" cy="13.5" r="2" fill="none" stroke="#a8a8a8"/><path d="M8 1.5 h6 v4" stroke="#a8a8a8" fill="none"/></svg>
<div class="t" style="left:850.5px;top:699.14px;font-size:12px;line-height:12px;color:#6d6d6d;font-weight:normal;letter-spacing:-0.2px;">Clip</div>
<svg style="position:absolute;left:822px;top:719px;" width="16" height="16" viewBox="0 0 16 16"><path d="M5.5 0.5 H10.5 V6 H13.5 L8 12.5 L2.5 6 H5.5Z" fill="#f4f4f4" stroke="#a8a8a8"/><path d="M1 9 V15.5 H7" stroke="#a8a8a8" fill="none"/></svg>
<div class="t" style="left:850.5px;top:721.14px;font-size:12px;line-height:12px;color:#6d6d6d;font-weight:normal;letter-spacing:-0.2px;">Navigate in</div>
<svg style="position:absolute;left:822px;top:741px;" width="16" height="16" viewBox="0 0 16 16"><path d="M5.5 15.5 H10.5 V9 H13.5 L8 2.5 L2.5 9 H5.5Z" fill="#f4f4f4" stroke="#a8a8a8"/><path d="M0 12.5 H5" stroke="#a8a8a8"/></svg>
<div class="t" style="left:850.5px;top:743.14px;font-size:12px;line-height:12px;color:#6d6d6d;font-weight:normal;letter-spacing:-0.2px;">Navigate out</div>
<svg style="position:absolute;left:822px;top:763px;" width="16" height="16" viewBox="0 0 16 16"><path d="M0 2.5 H14.5 M0 6.5 H8.5 V11.5 M0 11.5 H8" stroke="#a8a8a8" stroke-width="1.1" fill="none"/><rect x="5.5" y="0.5" width="7" height="4" fill="#f4f4f4" stroke="#a8a8a8" stroke-width="1.1"/><rect x="1.5" y="9.5" width="4" height="4" fill="#f4f4f4" stroke="#a8a8a8" stroke-width="1.1"/><path d="M9 10 Q12 9 14 13 M12 14 L14 13 L14.5 11" stroke="#a8a8a8" fill="none" stroke-width="1.2"/></svg>
<div class="t" style="left:850.5px;top:765.14px;font-size:12px;line-height:12px;color:#6d6d6d;font-weight:normal;letter-spacing:-0.2px;">Expand out</div>
<div style="position:absolute;left:846px;top:785px;width:312px;height:1px;background:#cdcdcd"></div>
<div style="position:absolute;left:846px;top:786px;width:312px;height:1px;background:#fbfbfb"></div>
<svg style="position:absolute;left:823px;top:793px;" width="14" height="14" viewBox="0 0 14 14"><rect x="0.5" y="0.5" width="13" height="12.5" fill="none" stroke="#7a7a7a"/><path d="M7 3 V10.5 M3.2 6.8 H10.8" stroke="#7a7a7a" stroke-width="2.4"/></svg>
<div class="t" style="left:850.5px;top:794.14px;font-size:12px;line-height:12px;color:#6d6d6d;font-weight:normal;letter-spacing:-0.2px;">Expand</div>
<svg style="position:absolute;left:823px;top:815px;" width="14" height="14" viewBox="0 0 14 14"><rect x="0.5" y="0.5" width="13" height="12.5" fill="none" stroke="#7a7a7a"/><path d="M3.2 6.8 H10.8" stroke="#7a7a7a" stroke-width="2.4"/></svg>
<div class="t" style="left:850.5px;top:816.14px;font-size:12px;line-height:12px;color:#6d6d6d;font-weight:normal;letter-spacing:-0.2px;">Collapse</div>
<div style="position:absolute;left:846px;top:836px;width:312px;height:1px;background:#cdcdcd"></div>
<div style="position:absolute;left:846px;top:837px;width:312px;height:1px;background:#fbfbfb"></div>
<svg style="position:absolute;left:822px;top:843px;" width="16" height="16" viewBox="0 0 16 16"><path d="M0 3.5h4 M0 7h4" stroke="#a8a8a8"/><rect x="4.5" y="0.5" width="6" height="9" fill="none" stroke="#a8a8a8"/><path d="M13 8 A4 4 0 1 0 13 15" fill="none" stroke="#a8a8a8" stroke-width="1.3"/><path d="M12.5 3 v3" stroke="#a8a8a8"/></svg>
<div class="t" style="left:850.5px;top:845.14px;font-size:12px;line-height:12px;color:#6d6d6d;font-weight:normal;letter-spacing:-0.2px;">Compact View</div>
<svg style="position:absolute;left:822px;top:865px;" width="16" height="16" viewBox="0 0 16 16"><path d="M0 3.5h4 M0 7h4 M0 10.5h4" stroke="#a8a8a8"/><rect x="4.5" y="0.5" width="7" height="14" fill="none" stroke="#a8a8a8"/><path d="M7 15 V9 L10 13 L13 9 V15" fill="none" stroke="#a8a8a8" stroke-width="1.2"/></svg>
<div class="t" style="left:850.5px;top:867.14px;font-size:12px;line-height:12px;color:#6d6d6d;font-weight:normal;letter-spacing:-0.2px;">Normal View</div>
<div style="position:absolute;left:846px;top:887px;width:312px;height:1px;background:#cdcdcd"></div>
<div style="position:absolute;left:846px;top:888px;width:312px;height:1px;background:#fbfbfb"></div>
<svg style="position:absolute;left:822px;top:894px;" width="16" height="16" viewBox="0 0 16 16"><path d="M0 2.5 H14.5 M0 6.5 H8.5 V11.5 M0 11.5 H8" stroke="#a8a8a8" stroke-width="1.1" fill="none"/><rect x="5.5" y="0.5" width="7" height="4" fill="#f4f4f4" stroke="#a8a8a8" stroke-width="1.1"/><rect x="1.5" y="9.5" width="4" height="4" fill="#f4f4f4" stroke="#a8a8a8" stroke-width="1.1"/><rect x="8.5" y="9.5" width="6" height="6" fill="#f8f8f8" stroke="#a8a8a8"/><path d="M10 11.5h3 M10 13.5h3" stroke="#a8a8a8"/></svg>
<div class="t" style="left:850.5px;top:896.14px;font-size:12px;line-height:12px;color:#6d6d6d;font-weight:normal;letter-spacing:-0.2px;">Default Layout</div>
<svg style="position:absolute;left:822px;top:916px;" width="16" height="16" viewBox="0 0 16 16"><path d="M0 2.5 H14.5 M0 6.5 H8.5 V11.5 M0 11.5 H8" stroke="#a8a8a8" stroke-width="1.1" fill="none"/><rect x="5.5" y="0.5" width="7" height="4" fill="#f4f4f4" stroke="#a8a8a8" stroke-width="1.1"/><rect x="1.5" y="9.5" width="4" height="4" fill="#f4f4f4" stroke="#a8a8a8" stroke-width="1.1"/><path d="M8 15.5 L11 8.5 L14 15.5 M9 13h4" stroke="#a8a8a8" fill="none" stroke-width="1.3"/></svg>
<div class="t" style="left:850.5px;top:918.14px;font-size:12px;line-height:12px;color:#6d6d6d;font-weight:normal;letter-spacing:-0.2px;">Auto Layout</div>
<div style="position:absolute;left:846px;top:938px;width:312px;height:1px;background:#cdcdcd"></div>
<div style="position:absolute;left:846px;top:939px;width:312px;height:1px;background:#fbfbfb"></div>
<svg style="position:absolute;left:822px;top:945px;" width="16" height="16" viewBox="0 0 16 16"><path d="M1 15 L2 11 L12 1 L15 4 L5 14 Z" fill="#e8e8e8" stroke="#b8b8b8"/></svg>
<div class="t" style="left:850.5px;top:947.14px;font-size:12px;line-height:12px;color:#6d6d6d;font-weight:normal;letter-spacing:-0.2px;">Edit Function Overview</div>
<div style="position:absolute;left:846px;top:967px;width:312px;height:1px;background:#cdcdcd"></div>
<div style="position:absolute;left:846px;top:968px;width:312px;height:1px;background:#fbfbfb"></div>
<svg style="position:absolute;left:822px;top:974px;" width="16" height="16" viewBox="0 0 16 16"><path d="M0 2.5 H14.5" stroke="#1e3c58" stroke-width="1.1"/><rect x="5.5" y="0.5" width="7" height="4" fill="#f4fbff" stroke="#1e3c58" stroke-width="1.1"/><path d="M0 6.5 H8.5 V11.5 H12" stroke="#a0283a" stroke-width="2" fill="none"/><path d="M11 8 L15.5 11.5 L11 15Z" fill="#a0283a"/><rect x="1.5" y="9.5" width="4" height="4" fill="#f4fbff" stroke="#1e3c58" stroke-width="1.1"/></svg>
<div class="t" style="left:850.5px;top:976.14px;font-size:12px;line-height:12px;color:#000;font-weight:normal;letter-spacing:-0.2px;">output (1)</div>
<svg style="position:absolute;left:822px;top:996px;" width="16" height="16" viewBox="0 0 16 16"><path d="M0 2.5 H14.5" stroke="#1e3c58" stroke-width="1.1"/><rect x="5.5" y="0.5" width="7" height="4" fill="#f4fbff" stroke="#1e3c58" stroke-width="1.1"/><path d="M0 6.5 H8.5" stroke="#1e3c58" stroke-width="1.1"/><path d="M4 7 L8 7 V12.5 H15" stroke="#a0283a" stroke-width="2" fill="none"/><path d="M6.5 4.5 L3 7.2 L6.5 10Z" fill="#a0283a"/><rect x="1.5" y="9.5" width="4" height="4" fill="#f4fbff" stroke="#1e3c58" stroke-width="1.1"/></svg>
<div class="t" style="left:850.5px;top:998.14px;font-size:12px;line-height:12px;color:#000;font-weight:normal;letter-spacing:-0.2px;">input (1)</div>
<svg style="position:absolute;left:822px;top:1018px;" width="16" height="16" viewBox="0 0 16 16"><path d="M0 2.5 H14.5 M0 6.5 H8.5 V11.5 M0 11.5 H8" stroke="#a8a8a8" stroke-width="1.1" fill="none"/><rect x="5.5" y="0.5" width="7" height="4" fill="#f4f4f4" stroke="#a8a8a8" stroke-width="1.1"/><rect x="1.5" y="9.5" width="4" height="4" fill="#f4f4f4" stroke="#a8a8a8" stroke-width="1.1"/><circle cx="11" cy="11.5" r="4" fill="#d8d8d8" stroke="#a8a8a8"/><path d="M8.5 9 L13.5 14 M13.5 9 L8.5 14" stroke="#999"/></svg>
<div class="t" style="left:850.5px;top:1020.14px;font-size:12px;line-height:12px;color:#6d6d6d;font-weight:normal;letter-spacing:-0.2px;">Clear Highlighting</div>
<div class="t" style="left:1107.3px;top:619.14px;font-size:12px;line-height:12px;color:#000;font-weight:normal;letter-spacing:-0.2px;">Ctrl+F</div>
<svg style="position:absolute;left:1144px;top:978px;" width="6" height="9" viewBox="0 0 6 9"><path d="M1 0.8 L4.6 4.5 L1 8.2" fill="none" stroke="#333" stroke-width="1.4"/></svg>
<svg style="position:absolute;left:1144px;top:1000px;" width="6" height="9" viewBox="0 0 6 9"><path d="M1 0.8 L4.6 4.5 L1 8.2" fill="none" stroke="#333" stroke-width="1.4"/></svg>
<svg style="position:absolute;left:768px;top:543px;" width="13" height="20" viewBox="0 0 13 20"><path d="M0.5 0.5 V15.5 L4 12 L6.8 18 L9 17 L6.3 11 H11.5 Z" fill="#fff" stroke="#000" stroke-width="1"/></svg>
<div style="position:absolute;left:0px;top:0px;width:1920px;height:1px;background:#c4c4c4"></div>
<div style="position:absolute;left:0px;top:1px;width:1920px;height:1px;background:#9a9a9a"></div>
<div style="position:absolute;left:0px;top:0px;width:1px;height:1040px;background:#c4c4c4"></div>
<div style="position:absolute;left:1px;top:0px;width:1px;height:1040px;background:#9a9a9a"></div>
<div style="position:absolute;left:1917px;top:0px;width:1px;height:1040px;background:#9a9a9a"></div>
<div style="position:absolute;left:1918px;top:0px;width:2px;height:1040px;background:#c4c4c4"></div>
<div style="position:absolute;left:0px;top:1038px;width:1920px;height:1px;background:#9a9a9a"></div>
<div style="position:absolute;left:0px;top:1039px;width:1920px;height:1px;background:#c4c4c4"></div>
</body></html>
